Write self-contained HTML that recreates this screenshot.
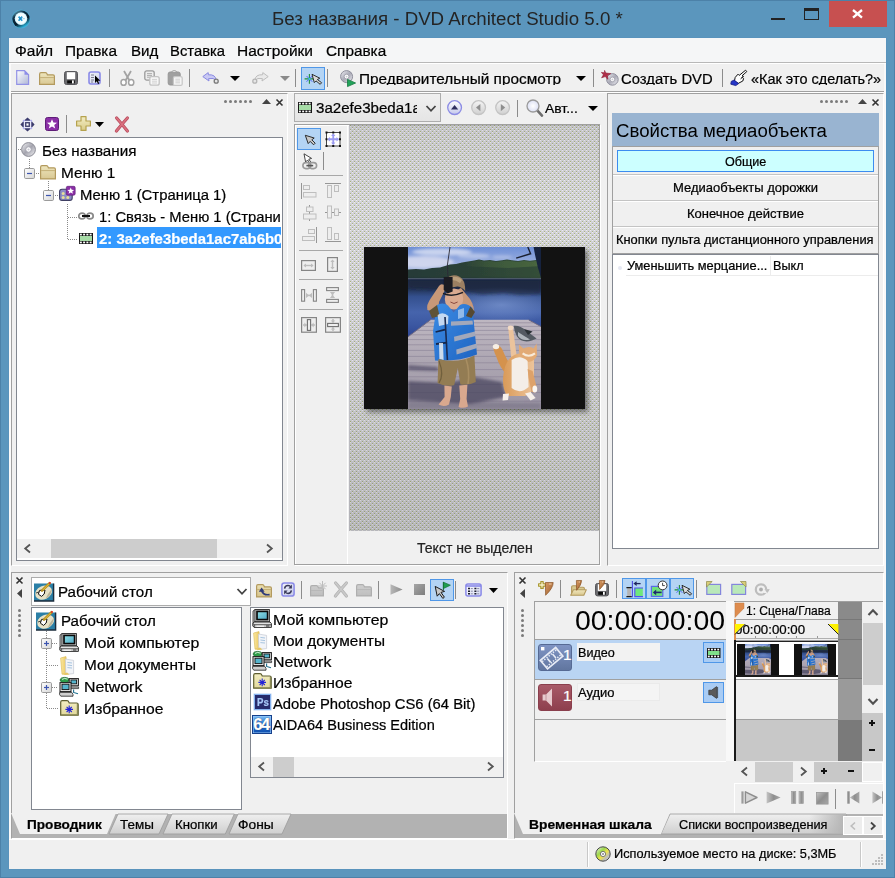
<!DOCTYPE html>
<html lang="ru"><head><meta charset="utf-8"><title>DVD Architect Studio 5.0</title><style>
html,body{margin:0;padding:0}
body{width:895px;height:878px;position:relative;overflow:hidden;background:#5B96BD;font-family:"Liberation Sans",sans-serif;font-size:14.5px}
div,svg,span.t{position:absolute;box-sizing:border-box}
span.t{white-space:nowrap;transform-origin:0 50%;display:block;-webkit-text-stroke:0.22px currentColor}
svg{overflow:visible}
</style></head><body>
<div style="left:0px;top:0px;width:895px;height:878px;box-shadow:inset 0 0 0 1px #4C81A8;"></div>
<div style="left:8px;top:37px;width:879px;height:833px;background:#5993BC;"></div>
<div style="left:9px;top:38px;width:877px;height:831px;background:#F0F0F0;"></div>
<span id="t1" class="t" style="left:271.74px;top:7.06px;font-size:18px;line-height:24px;color:#242424;-webkit-text-stroke:0;transform:scaleX(1.0380);">Без названия - DVD Architect Studio 5.0 *</span>
<div style="left:771px;top:17.5px;width:14px;height:2.5px;background:#222;"></div>
<div style="left:804px;top:8px;width:15px;height:12px;border:1px solid #222;border-top-width:3px;"></div>
<div style="left:829px;top:1px;width:58px;height:26px;background:#C75050;"></div>
<svg style="left:852.3px;top:8.6px;" width="11" height="9.6" viewBox="0 0 11 9.6"><path d="M1 1 L10 8.6 M10 1 L1 8.6" stroke="#fff" stroke-width="2.3" fill="none"/></svg>
<div style="left:9px;top:38px;width:877px;height:24px;background:#F5F6F7;"></div>
<div style="left:9px;top:62px;width:877px;height:1px;background:#B8B8B8;"></div>
<div style="left:9px;top:63px;width:877px;height:1px;background:#FFFFFF;"></div>
<span id="t2" class="t" style="left:14.943px;top:41.07px;font-size:15.1px;line-height:20px;color:#000;transform:scaleX(1.0260);">Файл</span>
<span id="t3" class="t" style="left:64.943px;top:41.07px;font-size:15.1px;line-height:20px;color:#000;transform:scaleX(1.0189);">Правка</span>
<span id="t4" class="t" style="left:130.943px;top:41.07px;font-size:15.1px;line-height:20px;color:#000;transform:scaleX(0.9986);">Вид</span>
<span id="t5" class="t" style="left:169.943px;top:41.07px;font-size:15.1px;line-height:20px;color:#000;transform:scaleX(0.9815);">Вставка</span>
<span id="t6" class="t" style="left:236.943px;top:41.07px;font-size:15.1px;line-height:20px;color:#000;transform:scaleX(1.0265);">Настройки</span>
<span id="t7" class="t" style="left:325.943px;top:41.07px;font-size:15.1px;line-height:20px;color:#000;transform:scaleX(1.0163);">Справка</span>
<div style="left:9px;top:64px;width:2px;height:775px;background:#FAFAFA;"></div>
<div style="left:884px;top:64px;width:2px;height:775px;background:#F8F8F8;"></div>
<div style="left:11px;top:91px;width:873px;height:1px;background:#A0A0A0;"></div>
<div style="left:11px;top:92px;width:873px;height:1px;background:#FFFFFF;"></div>
<div style="left:109px;top:69px;width:1px;height:18px;background:#8C8C8C;"></div>
<div style="left:189px;top:69px;width:1px;height:18px;background:#8C8C8C;"></div>
<div style="left:295px;top:69px;width:1px;height:18px;background:#8C8C8C;"></div>
<div style="left:327px;top:69px;width:1px;height:18px;background:#8C8C8C;"></div>
<div style="left:593px;top:69px;width:1px;height:18px;background:#8C8C8C;"></div>
<div style="left:722px;top:69px;width:1px;height:18px;background:#8C8C8C;"></div>
<div style="left:301px;top:67px;width:24px;height:23px;background:#B4D4F4;border:1px solid #4F97E8;"></div>
<div style="left:330px;top:64px;width:556px;height:21px;overflow:hidden">
<span id="t8" class="t" style="left:29.443px;top:4.57px;font-size:15.1px;line-height:20px;color:#000;transform:scaleX(1.0174);">Предварительный просмотр</span>
<span id="t9" class="t" style="left:291.34299999999996px;top:4.57px;font-size:15.1px;line-height:20px;color:#000;transform:scaleX(0.9813);">Создать DVD</span>
<span id="t10" class="t" style="left:420.943px;top:4.57px;font-size:15.1px;line-height:20px;color:#000;transform:scaleX(0.9586);">«Как это сделать?»</span>
</div>
<svg style="left:229.5px;top:76px;" width="10" height="5" viewBox="0 0 10 5"><path d="M0 0 H10 L5.0 5 Z" fill="#000"/></svg>
<svg style="left:279.5px;top:76px;" width="10" height="5" viewBox="0 0 10 5"><path d="M0 0 H10 L5.0 5 Z" fill="#8a8a8a"/></svg>
<svg style="left:576px;top:76px;" width="10" height="5" viewBox="0 0 10 5"><path d="M0 0 H10 L5.0 5 Z" fill="#000"/></svg>
<div style="left:11px;top:93px;width:277px;height:473px;background:#F0F0F0;border:1px solid #A0A0A0;border-right-color:#FFFFFF;border-bottom-color:#FFFFFF;"></div>
<div style="left:224px;top:100px;width:3px;height:3px;background:#7a7a7a;border-radius:1.5px;"></div>
<div style="left:229px;top:100px;width:3px;height:3px;background:#7a7a7a;border-radius:1.5px;"></div>
<div style="left:234px;top:100px;width:3px;height:3px;background:#7a7a7a;border-radius:1.5px;"></div>
<div style="left:239px;top:100px;width:3px;height:3px;background:#7a7a7a;border-radius:1.5px;"></div>
<div style="left:244px;top:100px;width:3px;height:3px;background:#7a7a7a;border-radius:1.5px;"></div>
<div style="left:249px;top:100px;width:3px;height:3px;background:#7a7a7a;border-radius:1.5px;"></div>
<svg style="left:261.5px;top:99px;" width="9" height="5" viewBox="0 0 9 5"><path d="M0 5 L4.5 0 L9 5 Z" fill="#444"/></svg>
<svg style="left:276px;top:98.5px;" width="7" height="7" viewBox="0 0 7 7"><path d="M0.5 0.5 L6.5 6.5 M6.5 0.5 L0.5 6.5" stroke="#333" stroke-width="1.6" fill="none"/></svg>
<div style="left:66px;top:115px;width:1px;height:18px;background:#8C8C8C;"></div>
<svg style="left:95px;top:122px;" width="9" height="5" viewBox="0 0 9 5"><path d="M0 0 H9 L4.5 5 Z" fill="#000"/></svg>
<div style="left:16px;top:137px;width:267px;height:424px;background:#FFFFFF;border:1px solid #828790;"></div>
<div style="left:97px;top:227px;width:184px;height:21px;background:#3399FF;"></div>
<span id="t11" class="t" style="left:41.643px;top:140.57px;font-size:15.1px;line-height:20px;color:#000;transform:scaleX(1.0071);">Без названия</span>
<span id="t12" class="t" style="left:60.943px;top:162.57px;font-size:15.1px;line-height:20px;color:#000;transform:scaleX(1.0182);">Меню 1</span>
<span id="t13" class="t" style="left:80.243px;top:184.57px;font-size:15.1px;line-height:20px;color:#000;transform:scaleX(0.9843);">Меню 1 (Страница 1)</span>
<div style="left:0;top:0;width:281px;height:878px;overflow:hidden"><span id="t14" class="t" style="left:98.943px;top:206.57px;font-size:15.1px;line-height:20px;color:#000;transform:scaleX(0.9783);">1: Связь - Меню 1 (Страница 1)</span></div>
<div style="left:0;top:0;width:281px;height:878px;overflow:hidden"><span id="t15" class="t" style="left:98.54299999999999px;top:228.57px;font-size:15.1px;line-height:20px;color:#fff;font-weight:bold;transform:scaleX(0.9890);">2: 3a2efe3beda1ac7ab6b0a</span></div>
<div style="left:17px;top:539px;width:265px;height:19px;background:#F0F0F0;"></div>
<div style="left:51px;top:539px;width:166px;height:19px;background:#CDCDCD;"></div>
<svg style="left:24px;top:544px;" width="7" height="9" viewBox="0 0 7 9"><path d="M6 0.5 L1.2 4.5 L6 8.5" stroke="#555" stroke-width="1.8" fill="none"/></svg>
<svg style="left:266px;top:544px;" width="7" height="9" viewBox="0 0 7 9"><path d="M1 0.5 L5.8 4.5 L1 8.5" stroke="#555" stroke-width="1.8" fill="none"/></svg>
<div style="left:294px;top:93px;width:147px;height:29px;background:linear-gradient(#F0F0F0,#E5E5E5);border:1px solid #ADADAD;"></div>
<div style="left:294px;top:124px;width:306px;height:441px;background:#F0F0F0;border:1px solid #A0A0A0;box-shadow:1px 1px 0 #FFFFFF;"></div>
<div style="left:0;top:0;width:417px;height:878px;overflow:hidden"><span id="t16" class="t" style="left:316.443px;top:98.27px;font-size:15.1px;line-height:20px;color:#000;transform:scaleX(0.9996);">3a2efe3beda1ac7ab6b0a</span></div>
<svg style="left:426px;top:104.5px;" width="10" height="7" viewBox="0 0 10 7"><path d="M0.5 1 L5.0 5.8 L9.5 1" stroke="#444" stroke-width="1.8" fill="none"/></svg>
<div style="left:517px;top:100px;width:1px;height:17px;background:#8C8C8C;"></div>
<span id="t17" class="t" style="left:544.7180000000001px;top:98.73px;font-size:12.6px;line-height:20px;color:#000;transform:scaleX(1.1046);">Авт...</span>
<svg style="left:587.5px;top:106px;" width="10" height="5" viewBox="0 0 10 5"><path d="M0 0 H10 L5.0 5 Z" fill="#000"/></svg>
<div style="left:295px;top:125px;width:304px;height:1px;background:#FFFFFF;"></div>
<div style="left:295px;top:125px;width:1px;height:439px;background:#FFFFFF;"></div>
<div style="left:347px;top:125px;width:1px;height:439px;background:#FFFFFF;"></div>
<div style="left:297px;top:128px;width:24px;height:22px;background:#B4D4F4;border:1px solid #4F97E8;"></div>
<div style="left:323px;top:152px;width:1px;height:18px;background:#8C8C8C;"></div>
<div style="left:299px;top:175px;width:44px;height:1px;background:#A8A8A8;"></div>
<div style="left:299px;top:250px;width:44px;height:1px;background:#A8A8A8;"></div>
<div style="left:299px;top:279px;width:44px;height:1px;background:#A8A8A8;"></div>
<div style="left:299px;top:309px;width:44px;height:1px;background:#A8A8A8;"></div>
<svg style="left:349px;top:125px" width="250" height="406"><defs><pattern id="chk" width="4" height="4" patternUnits="userSpaceOnUse"><rect width="4" height="4" fill="#D2D2D8"/><rect x="1" y="0" width="1" height="1" fill="#AAB482"/><rect x="3" y="2" width="1" height="1" fill="#AAB482"/><rect x="1" y="1" width="1" height="1" fill="#F0F0EB"/><rect x="3" y="3" width="1" height="1" fill="#F0F0EB"/></pattern><linearGradient id="chg" x1="0" y1="0" x2="0" y2="1"><stop offset="0" stop-color="#000" stop-opacity="0.06"/><stop offset="0.19" stop-color="#000" stop-opacity="0"/><stop offset="0.44" stop-color="#000" stop-opacity="0.012"/><stop offset="0.79" stop-color="#000" stop-opacity="0.088"/><stop offset="1" stop-color="#000" stop-opacity="0.128"/></linearGradient></defs><rect width="250" height="406" fill="url(#chk)"/><rect width="250" height="406" fill="url(#chg)"/></svg>
<div style="left:364px;top:247px;width:221px;height:162px;background:#121212;box-shadow:3px 3px 5px rgba(0,0,0,0.45);"></div>
<svg style="left:408px;top:247px" width="133" height="162" viewBox="0 0 133 162"><defs>
<linearGradient id="psky" x1="0" y1="0" x2="0" y2="1"><stop offset="0" stop-color="#6E8FD6"/><stop offset="0.4" stop-color="#94AADE"/><stop offset="1" stop-color="#CCD3EA"/></linearGradient>
<linearGradient id="plake" x1="0" y1="0" x2="0" y2="1"><stop offset="0" stop-color="#1A2842"/><stop offset="0.16" stop-color="#20304F"/><stop offset="0.3" stop-color="#34508E"/><stop offset="0.55" stop-color="#4664AC"/><stop offset="0.75" stop-color="#3C58A2"/><stop offset="1" stop-color="#2B4290"/></linearGradient>
<radialGradient id="plight" cx="0.7" cy="0.55" r="0.45"><stop offset="0" stop-color="#7F9AD4" stop-opacity="0.7"/><stop offset="1" stop-color="#7F9AD4" stop-opacity="0"/></radialGradient>
<linearGradient id="pdock" x1="0" y1="0" x2="0" y2="1"><stop offset="0" stop-color="#BEB7C1"/><stop offset="0.45" stop-color="#AEA7B3"/><stop offset="1" stop-color="#9A94A3"/></linearGradient>
<linearGradient id="pvest" x1="0" y1="0" x2="1" y2="1"><stop offset="0" stop-color="#3C8CE4"/><stop offset="1" stop-color="#1F64C2"/></linearGradient>
<linearGradient id="pcat" x1="0" y1="0" x2="1" y2="0"><stop offset="0" stop-color="#D99A58"/><stop offset="1" stop-color="#EDC49A"/></linearGradient>
<linearGradient id="ptree" x1="0" y1="0" x2="1" y2="0"><stop offset="0" stop-color="#263A38"/><stop offset="0.5" stop-color="#2B4236"/><stop offset="1" stop-color="#344E38"/></linearGradient>
<linearGradient id="ptreehl" x1="0" y1="0" x2="1" y2="0"><stop offset="0" stop-color="#54753F" stop-opacity="0"/><stop offset="0.4" stop-color="#4E6E40" stop-opacity="0.45"/><stop offset="1" stop-color="#587844" stop-opacity="0.6"/></linearGradient>
<filter id="pb1" x="-10%" y="-10%" width="120%" height="120%"><feGaussianBlur stdDeviation="0.6"/></filter>
<filter id="pb2" x="-20%" y="-20%" width="140%" height="140%"><feGaussianBlur stdDeviation="1.8"/></filter>
<clipPath id="pclip"><rect width="133" height="162"/></clipPath>
</defs>
<g clip-path="url(#pclip)">
<rect width="133" height="34" fill="url(#psky)"/>
<g filter="url(#pb2)"><ellipse cx="34" cy="5" rx="30" ry="3.4" fill="#DCE2F4" opacity="0.8"/><ellipse cx="16" cy="15" rx="30" ry="6" fill="#D8DCF0" opacity="0.85"/><ellipse cx="66" cy="9" rx="16" ry="2.6" fill="#D0D8F0" opacity="0.6"/><ellipse cx="94" cy="10" rx="10" ry="1.6" fill="#C6D0EC" opacity="0.6"/></g>
<rect y="31" width="133" height="62" fill="url(#plake)"/>
<rect y="36" width="133" height="40" fill="url(#plight)"/>
<g filter="url(#pb1)">
<path d="M0 22.4 L8 22 L16 22.6 L24 21 L32 20.4 L37 19 L42 17.6 L48 17 L54 15.4 L60 14.6 L66 13.6 L71 12.4 L76 13.6 L82 13 L88 14 L94 13.2 L99 12.4 L104 13.2 L110 14 L116 13 L122 13.8 L128 13 L133 13.6 V31.4 H0 Z" fill="url(#ptree)"/>
<path d="M56 16.6 L60 15.6 L66 14.6 L71 13.4 L76 14.6 L82 14 L88 15 L94 14.2 L99 13.4 L104 14.2 L110 15 L116 14 L122 14.8 L128 14 L133 14.6 V19 L100 21 L56 19 Z" fill="url(#ptreehl)"/>
<path d="M0 31.2 H133 V32.2 H0 Z" fill="#7E8AA0" opacity="0.7"/>
<path d="M0 32.4 H133 V47 L112 48 L96 46 L74 47.4 L50 43 L24 42.4 L0 41 Z" fill="#1A263E" opacity="0.6" filter="url(#pb2)"/>
</g>
<path d="M125.6 0 H133 V31 Q128.6 18 125.6 0 Z" fill="#16223E"/>
<path d="M108.2 11.1 L122.6 6.7 L119.8 0" stroke="#1A2030" stroke-width="1.4" fill="none"/>
<path d="M0 89.8 L22.6 72.8 H120.6 L133 79.6 V162 H0 Z" fill="url(#pdock)"/>
<path d="M0 89.8 L22.6 72.8 M120.6 72.8 L133 79.6" stroke="#6E6880" stroke-width="1"/>
<g stroke="#81798F" stroke-width="0.6" opacity="0.85"><path d="M19 75.8 H126 M14 79.4 H132 M9 83.4 H133 M3 87.8 H133 M0 92.6 H133 M0 97.8 H133 M0 103.4 H133 M0 109.4 H133 M0 115.8 H133 M0 122.6 H133 M0 129.8 H133 M0 137.4 H133 M0 145.6 H133 M0 154.2 H133"/></g>
<g filter="url(#pb2)"><path d="M0 118 L30 120 L30 124 L0 123 Z" fill="#4A4460" opacity="0.7"/><path d="M0 134 L40 136 L66 130 L94 135 L98 150 L62 157 L0 153 Z" fill="#453F5A" opacity="0.7"/><path d="M0 154 L133 156 V162 H0 Z" fill="#5A546A" opacity="0.35"/></g>
<g filter="url(#pb1)">
<path d="M42 0 L39.4 18 L40 30" stroke="#2A2A36" stroke-width="0.9" fill="none"/>
<!-- boy arms / head -->
<path d="M19.4 63 Q18 58 23 51 L31 39 Q33 36 36 38 L37 43 L31 55 L30 66 Z" fill="#C89878"/>
<path d="M65.4 66 Q67 60 62 52 L53 41 L49 43 L53 56 L56 68 Z" fill="#C89878"/>
<ellipse cx="46" cy="52" rx="9.2" ry="10.6" fill="#DAAA90"/>
<path d="M35.4 43 Q35 29.4 46 28.2 Q57.6 28.6 57.2 44 Q52 38 46.4 40 Q41 40 35.4 43 Z" fill="#9C8062"/>
<path d="M44 30 Q50 29 54 33 L52 36 Q48 33 44 33 Z" fill="#C2A884" opacity="0.8"/>
<path d="M35.8 30 H44.6 V44.6 L39.6 46.6 L35.8 43 Z" fill="#1C1C24"/>
<path d="M35 46.4 Q44 50.4 55 45.4" stroke="#1C1C24" stroke-width="1.5" fill="none"/>
<path d="M42.4 55 Q46 58 49.6 55" stroke="#8A4A40" stroke-width="1" fill="none"/>
<!-- vest -->
<path d="M29 58 Q35 54.6 40 58.6 L45.6 65.6 L52 58 Q58 55 64.4 61 L69 107.6 Q50 115 27 113.6 L25 84 Z" fill="url(#pvest)"/>
<path d="M21 64 L29 58 L31.6 69 L24 71 Z" fill="#5E5238"/><path d="M62.4 59.4 L67 65 L63.4 71 L58 69 Z" fill="#564A32"/>
<path d="M29.6 68 Q35 64 40.4 69 L40 77 L31 79 Z" fill="#DDE8F4" opacity="0.85"/><path d="M50 63 L56 61 L56 70 L50 72 Z" fill="#C6DCF2" opacity="0.65"/>
<path d="M43 74.6 L64.6 73.6 L65 77.6 L43 78.8 Z" fill="#A2A8BA"/><path d="M46 89.8 L66.9 84.6 L67.6 89 L46.4 94.6 Z" fill="#A2A8BA"/><path d="M48.3 102.5 L68.7 96.5 L69.2 101 L48.6 107.4 Z" fill="#A2A8BA"/>
<path d="M37 70 L39.4 113" stroke="#1A2A50" stroke-width="1.6"/><path d="M27.6 85 L37 82.6 M28 97 L39 95.6" stroke="#16264A" stroke-width="1.8"/>
<path d="M31 96 L35 96 L35.6 113 L31.4 112 Z" fill="#E8ECF0" opacity="0.85"/>
<!-- shorts / legs -->
<path d="M30.4 112 Q50 117 66.4 108.6 L67.8 135 Q60 139 52.4 137.4 L49.8 121 L46.2 138 Q38 140.4 29.6 136 Z" fill="#937B52"/>
<path d="M31 114 Q36.4 128 31 136" stroke="#71603E" stroke-width="1.2" fill="none"/><path d="M58 112 Q62 124 60 137" stroke="#A88E62" stroke-width="1.6" fill="none"/>
<path d="M36.4 138.6 L43.8 139.4 L42.8 150 L41 157.4 Q36 160.6 30.6 157.6 L36.6 150 Z" fill="#D9A88E"/>
<path d="M51.3 138.4 L59.4 137.8 L58.6 152 L60 159.4 Q55.6 162 50.6 160 L52.2 152 Z" fill="#D9A88E"/>
<!-- fish -->
<path d="M105.8 78.8 Q112 78 118 83.6 L128.6 91.6 L124 93.6 Q114 96.6 109 89.6 Q106 84.6 105.8 78.8 Z" fill="#525A62"/><path d="M110 85 Q116 89 122 92.4 Q114 94.6 110 89 Z" fill="#C6CCD2" opacity="0.8"/><path d="M116 82 L124.6 84.4 L120 88 Z" fill="#2A3036"/>
<!-- cat -->
<path d="M85.8 99 Q90.6 96 94.6 103 Q98.6 113 103.4 119 L99 128 Q92 121 88 109 Q84.6 102 85.8 99 Z" fill="#D4924E"/><ellipse cx="88" cy="99.6" rx="3.2" ry="2.6" fill="#F6EEE4"/>
<path d="M100.2 80.6 Q104 78.4 105.2 83 L108 104 L109.4 114 L103.6 114 L101.6 95 Z" fill="#EBC39C"/><ellipse cx="102.6" cy="80.8" rx="2.8" ry="2.4" fill="#F2DAC4"/>
<path d="M96 124 Q98.6 109 111 106.6 Q123 104.6 126 112.6 L126 128 L123 146 L117 149 L99 149 Q93 139 96 124 Z" fill="url(#pcat)"/>
<path d="M111 97.6 L115.4 101.6 Q121 98.6 125.6 101.4 L128.6 96.6 L129 108.6 Q126 115.6 118.4 114.8 Q111.6 112 111 104 Z" fill="#E2AA74"/>
<path d="M114.6 106.4 Q120.6 111 127 106.4" stroke="#F8EAD8" stroke-width="2" fill="none"/>
<path d="M103.6 113 Q112 107 119.6 114 L120.6 140 Q112 148 103.6 141 Z" fill="#F4EEE8"/>
<path d="M119.6 122 L124.6 124 L128.4 139 L127.4 145.6 L123.6 145 L120.6 131 Z" fill="#DDA26A"/><ellipse cx="126.8" cy="142" rx="2.4" ry="3.6" fill="#FAF6F0"/>
<path d="M95 147 L101 146.6 L100 153 L94.6 153.6 Z" fill="#F6F0EA"/><path d="M117 146.6 L122.6 145 L127.6 151 L122.6 153.6 Z" fill="#F6F0EA"/>
</g>
</g></svg>
<div style="left:349px;top:125px;width:250px;height:406px;box-shadow:inset 0 1px 2px rgba(0,0,0,0.10);"></div>
<div style="left:349px;top:531px;width:250px;height:33px;background:#F0F0F0;"></div>
<span id="t18" class="t" style="left:416.58500000000004px;top:537.88px;font-size:14.5px;line-height:20px;color:#222;transform:scaleX(0.9696);">Текст не выделен</span>
<div style="left:607px;top:93px;width:277px;height:473px;background:#F0F0F0;border:1px solid #A0A0A0;border-right-color:#FFFFFF;border-bottom-color:#FFFFFF;"></div>
<div style="left:820px;top:100px;width:3px;height:3px;background:#7a7a7a;border-radius:1.5px;"></div>
<div style="left:825px;top:100px;width:3px;height:3px;background:#7a7a7a;border-radius:1.5px;"></div>
<div style="left:830px;top:100px;width:3px;height:3px;background:#7a7a7a;border-radius:1.5px;"></div>
<div style="left:835px;top:100px;width:3px;height:3px;background:#7a7a7a;border-radius:1.5px;"></div>
<div style="left:840px;top:100px;width:3px;height:3px;background:#7a7a7a;border-radius:1.5px;"></div>
<div style="left:845px;top:100px;width:3px;height:3px;background:#7a7a7a;border-radius:1.5px;"></div>
<svg style="left:858px;top:99px;" width="9" height="5" viewBox="0 0 9 5"><path d="M0 5 L4.5 0 L9 5 Z" fill="#444"/></svg>
<svg style="left:872px;top:98.5px;" width="7" height="7" viewBox="0 0 7 7"><path d="M0.5 0.5 L6.5 6.5 M6.5 0.5 L0.5 6.5" stroke="#333" stroke-width="1.6" fill="none"/></svg>
<div style="left:612px;top:113px;width:267px;height:34px;background:#99B4D1;"></div>
<span id="t19" class="t" style="left:616.368px;top:118.70px;font-size:17.6px;line-height:24px;color:#000;-webkit-text-stroke:0;transform:scaleX(1.0592);">Свойства медиаобъекта</span>
<div style="left:612px;top:146px;width:267px;height:108px;background:#F0F0F0;border:1px solid #A0A0A0;"></div>
<div style="left:617px;top:150px;width:257px;height:22px;background:#CCFFFF;border:1px solid #3C8CF0;"></div>
<div style="left:613px;top:174px;width:265px;height:1px;background:#C4C4C4;"></div>
<div style="left:613px;top:175px;width:265px;height:1px;background:#FFFFFF;"></div>
<div style="left:613px;top:200px;width:265px;height:1px;background:#C4C4C4;"></div>
<div style="left:613px;top:201px;width:265px;height:1px;background:#FFFFFF;"></div>
<div style="left:613px;top:226px;width:265px;height:1px;background:#C4C4C4;"></div>
<div style="left:613px;top:227px;width:265px;height:1px;background:#FFFFFF;"></div>
<span id="t20" class="t" style="left:724.632px;top:151.50px;font-size:12.4px;line-height:20px;color:#000;transform:scaleX(1.0149);">Общие</span>
<span id="t21" class="t" style="left:673.132px;top:177.50px;font-size:12.4px;line-height:20px;color:#000;transform:scaleX(1.0479);">Медиаобъекты дорожки</span>
<span id="t22" class="t" style="left:687.132px;top:203.50px;font-size:12.4px;line-height:20px;color:#000;transform:scaleX(1.0506);">Конечное действие</span>
<span id="t23" class="t" style="left:616.132px;top:229.50px;font-size:12.4px;line-height:20px;color:#000;transform:scaleX(1.0388);">Кнопки пульта дистанционного управления</span>
<div style="left:612px;top:254px;width:267px;height:295px;background:#FFFFFF;border:1px solid #828790;"></div>
<span id="t24" class="t" style="left:627.132px;top:255.80px;font-size:12.4px;line-height:20px;color:#000;transform:scaleX(1.0339);">Уменьшить мерцание...</span>
<span id="t25" class="t" style="left:772.632px;top:255.80px;font-size:12.4px;line-height:20px;color:#000;transform:scaleX(1.0204);">Выкл</span>
<div style="left:618px;top:266px;width:4px;height:4px;background:#E6E8F2;border-radius:2px;"></div>
<div style="left:626px;top:275px;width:252px;height:1px;background:#ECECEC;"></div>
<div style="left:770px;top:256px;width:1px;height:20px;background:#ECECEC;"></div>
<div style="left:11px;top:572px;width:497px;height:267px;background:#F0F0F0;border:1px solid #A0A0A0;border-right-color:#FFFFFF;border-bottom-color:#FFFFFF;"></div>
<div style="left:12px;top:814px;width:495px;height:24px;background:#B2B2B2;"></div>
<svg style="left:16px;top:577px;" width="7" height="7" viewBox="0 0 7 7"><path d="M0.5 0.5 L6.5 6.5 M6.5 0.5 L0.5 6.5" stroke="#333" stroke-width="1.6" fill="none"/></svg>
<svg style="left:17px;top:589px;" width="5" height="9" viewBox="0 0 5 9"><path d="M5 0 L0 4.5 L5 9 Z" fill="#444"/></svg>
<div style="left:18px;top:609px;width:3px;height:3px;background:#7a7a7a;border-radius:1.5px;"></div>
<div style="left:18px;top:614px;width:3px;height:3px;background:#7a7a7a;border-radius:1.5px;"></div>
<div style="left:18px;top:619px;width:3px;height:3px;background:#7a7a7a;border-radius:1.5px;"></div>
<div style="left:18px;top:624px;width:3px;height:3px;background:#7a7a7a;border-radius:1.5px;"></div>
<div style="left:18px;top:629px;width:3px;height:3px;background:#7a7a7a;border-radius:1.5px;"></div>
<div style="left:18px;top:634px;width:3px;height:3px;background:#7a7a7a;border-radius:1.5px;"></div>
<div style="left:31px;top:577px;width:220px;height:29px;background:#FFFFFF;border:1px solid #ACACAC;"></div>
<span id="t26" class="t" style="left:58.443px;top:582.07px;font-size:15.1px;line-height:20px;color:#000;transform:scaleX(0.9996);">Рабочий стол</span>
<svg style="left:236.5px;top:588px;" width="10" height="7" viewBox="0 0 10 7"><path d="M0.5 1 L5.0 5.8 L9.5 1" stroke="#444" stroke-width="1.8" fill="none"/></svg>
<div style="left:31px;top:607px;width:211px;height:203px;background:#FFFFFF;border:1px solid #828790;"></div>
<span id="t27" class="t" style="left:60.643px;top:611.07px;font-size:15.1px;line-height:20px;color:#000;transform:scaleX(0.9996);">Рабочий стол</span>
<span id="t28" class="t" style="left:83.54299999999999px;top:633.07px;font-size:15.1px;line-height:20px;color:#000;transform:scaleX(1.0497);">Мой компьютер</span>
<span id="t29" class="t" style="left:83.54299999999999px;top:655.07px;font-size:15.1px;line-height:20px;color:#000;transform:scaleX(1.0178);">Мои документы</span>
<span id="t30" class="t" style="left:83.54299999999999px;top:677.07px;font-size:15.1px;line-height:20px;color:#000;transform:scaleX(1.0539);">Network</span>
<span id="t31" class="t" style="left:83.54299999999999px;top:699.07px;font-size:15.1px;line-height:20px;color:#000;transform:scaleX(1.0385);">Избранное</span>
<div style="left:301px;top:581px;width:1px;height:18px;background:#8C8C8C;"></div>
<div style="left:378px;top:581px;width:1px;height:18px;background:#8C8C8C;"></div>
<div style="left:455px;top:581px;width:1px;height:18px;background:#8C8C8C;"></div>
<div style="left:430px;top:579px;width:24px;height:22px;background:#B4D4F4;border:1px solid #4F97E8;"></div>
<svg style="left:489px;top:588px;" width="9" height="5" viewBox="0 0 9 5"><path d="M0 0 H9 L4.5 5 Z" fill="#000"/></svg>
<div style="left:250px;top:607px;width:254px;height:171px;background:#FFFFFF;border:1px solid #828790;"></div>
<span id="t32" class="t" style="left:273.34299999999996px;top:609.57px;font-size:15.1px;line-height:20px;color:#000;transform:scaleX(1.0497);">Мой компьютер</span>
<span id="t33" class="t" style="left:273.34299999999996px;top:630.57px;font-size:15.1px;line-height:20px;color:#000;transform:scaleX(1.0178);">Мои документы</span>
<span id="t34" class="t" style="left:273.34299999999996px;top:651.57px;font-size:15.1px;line-height:20px;color:#000;transform:scaleX(1.0539);">Network</span>
<span id="t35" class="t" style="left:273.34299999999996px;top:672.57px;font-size:15.1px;line-height:20px;color:#000;transform:scaleX(1.0385);">Избранное</span>
<span id="t36" class="t" style="left:273.34299999999996px;top:693.57px;font-size:15.1px;line-height:20px;color:#000;transform:scaleX(0.9804);">Adobe Photoshop CS6 (64 Bit)</span>
<span id="t37" class="t" style="left:273.34299999999996px;top:714.57px;font-size:15.1px;line-height:20px;color:#000;transform:scaleX(0.9641);">AIDA64 Business Edition</span>
<div style="left:251px;top:757px;width:252px;height:20px;background:#F0F0F0;"></div>
<div style="left:273px;top:757px;width:21px;height:20px;background:#CDCDCD;"></div>
<svg style="left:258px;top:762px;" width="7" height="9" viewBox="0 0 7 9"><path d="M6 0.5 L1.2 4.5 L6 8.5" stroke="#555" stroke-width="1.8" fill="none"/></svg>
<svg style="left:487px;top:762px;" width="7" height="9" viewBox="0 0 7 9"><path d="M1 0.5 L5.8 4.5 L1 8.5" stroke="#555" stroke-width="1.8" fill="none"/></svg>
<div style="left:514px;top:572px;width:370px;height:267px;background:#F0F0F0;border:1px solid #A0A0A0;border-right-color:#FFFFFF;border-bottom-color:#FFFFFF;"></div>
<div style="left:515px;top:814px;width:368px;height:24px;background:#B2B2B2;"></div>
<svg style="left:519px;top:577px;" width="7" height="7" viewBox="0 0 7 7"><path d="M0.5 0.5 L6.5 6.5 M6.5 0.5 L0.5 6.5" stroke="#333" stroke-width="1.6" fill="none"/></svg>
<svg style="left:520px;top:589px;" width="5" height="9" viewBox="0 0 5 9"><path d="M5 0 L0 4.5 L5 9 Z" fill="#444"/></svg>
<div style="left:521px;top:609px;width:3px;height:3px;background:#7a7a7a;border-radius:1.5px;"></div>
<div style="left:521px;top:614px;width:3px;height:3px;background:#7a7a7a;border-radius:1.5px;"></div>
<div style="left:521px;top:619px;width:3px;height:3px;background:#7a7a7a;border-radius:1.5px;"></div>
<div style="left:521px;top:624px;width:3px;height:3px;background:#7a7a7a;border-radius:1.5px;"></div>
<div style="left:521px;top:629px;width:3px;height:3px;background:#7a7a7a;border-radius:1.5px;"></div>
<div style="left:521px;top:634px;width:3px;height:3px;background:#7a7a7a;border-radius:1.5px;"></div>
<div style="left:560px;top:580px;width:1px;height:18px;background:#8C8C8C;"></div>
<div style="left:616px;top:580px;width:1px;height:18px;background:#8C8C8C;"></div>
<div style="left:696px;top:580px;width:1px;height:18px;background:#8C8C8C;"></div>
<div style="left:622px;top:578px;width:24px;height:21px;background:#B4D4F4;border:1px solid #4F97E8;"></div>
<div style="left:646px;top:578px;width:24px;height:21px;background:#B4D4F4;border:1px solid #4F97E8;"></div>
<div style="left:670px;top:578px;width:24px;height:21px;background:#B4D4F4;border:1px solid #4F97E8;"></div>
<div style="left:534px;top:601px;width:192px;height:161px;background:#F0F0F0;border:1px solid #A0A0A0;border-right:none;border-bottom-color:#FFFFFF;"></div>
<span id="t38" class="t" style="left:575.11px;top:605.24px;font-size:27px;line-height:32px;color:#000;-webkit-text-stroke:0;transform:scaleX(1.0525);">00:00:00:00</span>
<div style="left:535px;top:639px;width:191px;height:1px;background:#A0A0A0;"></div>
<div style="left:535px;top:640px;width:191px;height:39px;background:#B9D4F3;"></div>
<div style="left:535px;top:679px;width:191px;height:1px;background:#A0A0A0;"></div>
<div style="left:535px;top:719px;width:191px;height:1px;background:#A0A0A0;"></div>
<div style="left:538px;top:644px;width:34px;height:27px;background:linear-gradient(#7F94C4,#61769F);border:1px solid #566A94;border-radius:3px;"></div>
<div style="left:577px;top:643px;width:83px;height:18px;background:#F2F2F2;"></div>
<span id="t39" class="t" style="left:578.132px;top:642.80px;font-size:12.4px;line-height:20px;color:#000;transform:scaleX(1.0170);">Видео</span>
<div style="left:703px;top:642px;width:21px;height:21px;background:#A9CCF4;border:1px solid #4F97E8;"></div>
<div style="left:538px;top:684px;width:34px;height:27px;background:linear-gradient(#A85A68,#8E3F4E);border:1px solid #8A3F4D;border-radius:3px;"></div>
<div style="left:577px;top:683px;width:83px;height:18px;background:#F4F4F4;border:1px solid #EAEAEA;"></div>
<span id="t40" class="t" style="left:578.132px;top:683.00px;font-size:12.4px;line-height:20px;color:#000;transform:scaleX(1.0461);">Аудио</span>
<div style="left:703px;top:682px;width:21px;height:21px;background:#A9CCF4;border:1px solid #4F97E8;"></div>
<div style="left:726px;top:601px;width:8px;height:160px;background:#F8F8F8;"></div>
<div style="left:734px;top:602px;width:2px;height:18px;background:#F0F0F0;"></div>
<div style="left:734px;top:619px;width:2px;height:22px;background:#E0904E;"></div>
<div style="left:734px;top:640px;width:2px;height:121px;background:#1a1a1a;"></div>
<div style="left:736px;top:602px;width:102px;height:18px;background:#F0F0F0;"></div>
<div style="left:736px;top:619px;width:102px;height:1px;background:#A0A0A0;"></div>
<div style="left:736px;top:620px;width:102px;height:19px;background:#F0F0F0;"></div>
<div style="left:736px;top:640px;width:102px;height:1px;background:#A0A0A0;"></div>
<div style="left:736px;top:641px;width:102px;height:1px;background:#222;"></div>
<div style="left:736px;top:642px;width:102px;height:33px;background:#FFFFFF;"></div>
<div style="left:736px;top:675px;width:102px;height:2px;background:#1a1a1a;"></div>
<div style="left:736px;top:677px;width:102px;height:2px;background:#FFFFFF;"></div>
<div style="left:736px;top:679px;width:102px;height:41px;background:#F0F0F0;"></div>
<div style="left:736px;top:679px;width:102px;height:1px;background:#A0A0A0;"></div>
<div style="left:736px;top:719px;width:102px;height:1px;background:#A0A0A0;"></div>
<div style="left:736px;top:720px;width:102px;height:41px;background:#C8C8C8;"></div>
<div style="left:838px;top:602px;width:24px;height:77px;background:#8A8A8A;"></div>
<div style="left:838px;top:679px;width:24px;height:41px;background:#9A9A9A;"></div>
<div style="left:838px;top:720px;width:24px;height:41px;background:#7A7A7A;"></div>
<div style="left:838px;top:619px;width:24px;height:1px;background:#777;"></div>
<div style="left:838px;top:639px;width:24px;height:1px;background:#777;"></div>
<div style="left:838px;top:678px;width:24px;height:1px;background:#777;"></div>
<span id="t41" class="t" style="left:745.832px;top:600.70px;font-size:12.4px;line-height:20px;color:#000;transform:scaleX(0.9703);">1: Сцена/Глава</span>
<span id="t42" class="t" style="left:734.732px;top:620.40px;font-size:12.4px;line-height:20px;color:#000;transform:scaleX(1.0710);">00:00:00:00</span>
<div style="left:734px;top:601px;width:149px;height:1px;background:#A0A0A0;"></div>
<div style="left:862px;top:602px;width:21px;height:111px;background:#F0F0F0;"></div>
<div style="left:863px;top:623px;width:20px;height:62px;background:#CDCDCD;"></div>
<svg style="left:868px;top:609px;" width="10" height="7" viewBox="0 0 10 7"><path d="M0.5 6 L5.0 1.2 L9.5 6" stroke="#505050" stroke-width="2.1" fill="none"/></svg>
<svg style="left:868px;top:698px;" width="10" height="7" viewBox="0 0 10 7"><path d="M0.5 1 L5.0 5.8 L9.5 1" stroke="#505050" stroke-width="2.1" fill="none"/></svg>
<div style="left:862px;top:713px;width:21px;height:48px;background:#C8C8C8;"></div>
<div style="left:869px;top:722px;width:6px;height:2px;background:#111;"></div>
<div style="left:871px;top:720px;width:2px;height:6px;background:#111;"></div>
<div style="left:869px;top:749px;width:6px;height:2px;background:#111;"></div>
<div style="left:734px;top:762px;width:128px;height:20px;background:#F0F0F0;"></div>
<div style="left:755px;top:762px;width:38px;height:20px;background:#CDCDCD;"></div>
<svg style="left:741px;top:767px;" width="7" height="9" viewBox="0 0 7 9"><path d="M6 0.5 L1.2 4.5 L6 8.5" stroke="#555" stroke-width="1.8" fill="none"/></svg>
<svg style="left:800px;top:767px;" width="7" height="9" viewBox="0 0 7 9"><path d="M1 0.5 L5.8 4.5 L1 8.5" stroke="#555" stroke-width="1.8" fill="none"/></svg>
<div style="left:814px;top:762px;width:48px;height:20px;background:#C8C8C8;"></div>
<div style="left:821px;top:770px;width:6px;height:2px;background:#111;"></div>
<div style="left:823px;top:768px;width:2px;height:6px;background:#111;"></div>
<div style="left:848px;top:770px;width:6px;height:2px;background:#111;"></div>
<div style="left:862px;top:762px;width:21px;height:20px;background:#F0F0F0;border:1px solid #FFFFFF;"></div>
<div style="left:734px;top:783px;width:149px;height:30px;background:#F0F0F0;border-left:1px solid #FFFFFF;border-top:1px solid #FFFFFF;"></div>
<div style="left:835px;top:789px;width:1px;height:20px;background:#8C8C8C;"></div>
<div style="left:9px;top:839px;width:877px;height:1px;background:#FFFFFF;"></div>
<div style="left:587px;top:842px;width:1px;height:25px;background:#C8C8C8;"></div>
<div style="left:588px;top:842px;width:1px;height:25px;background:#FFFFFF;"></div>
<div style="left:860px;top:842px;width:1px;height:25px;background:#C8C8C8;"></div>
<div style="left:861px;top:842px;width:1px;height:25px;background:#FFFFFF;"></div>
<span id="t43" class="t" style="left:614.132px;top:843.50px;font-size:12.4px;line-height:20px;color:#000;transform:scaleX(1.0283);">Используемое место на диске: 5,3МБ</span>
<div style="left:872px;top:863px;width:2px;height:2px;background:#BDBDBD;"></div>
<div style="left:875px;top:860px;width:2px;height:2px;background:#BDBDBD;"></div>
<div style="left:875px;top:863px;width:2px;height:2px;background:#BDBDBD;"></div>
<div style="left:878px;top:857px;width:2px;height:2px;background:#BDBDBD;"></div>
<div style="left:878px;top:860px;width:2px;height:2px;background:#BDBDBD;"></div>
<div style="left:878px;top:863px;width:2px;height:2px;background:#BDBDBD;"></div>
<div style="left:881px;top:854px;width:2px;height:2px;background:#BDBDBD;"></div>
<div style="left:881px;top:857px;width:2px;height:2px;background:#BDBDBD;"></div>
<div style="left:881px;top:860px;width:2px;height:2px;background:#BDBDBD;"></div>
<div style="left:881px;top:863px;width:2px;height:2px;background:#BDBDBD;"></div>
<svg style="left:109px;top:814px;" width="68" height="20" viewBox="0 0 68 20"><defs><linearGradient id="tg109" x1="0" y1="0" x2="0" y2="1"><stop offset="0" stop-color="#EFEFEF"/><stop offset="1" stop-color="#CFCFCF"/></linearGradient></defs><path d="M9 0 H59 L50 20 H0 Z" fill="url(#tg109)" stroke="#9A9A9A" stroke-width="0.8"/></svg>
<span id="t44" class="t" style="left:119.932px;top:814.80px;font-size:12.4px;line-height:20px;color:#000;transform:scaleX(1.0843);">Темы</span>
<svg style="left:162.7px;top:814px;" width="80.30000000000001" height="20" viewBox="0 0 80.30000000000001 20"><defs><linearGradient id="tg162" x1="0" y1="0" x2="0" y2="1"><stop offset="0" stop-color="#EFEFEF"/><stop offset="1" stop-color="#CFCFCF"/></linearGradient></defs><path d="M9 0 H71.30000000000001 L62.30000000000001 20 H0 Z" fill="url(#tg162)" stroke="#9A9A9A" stroke-width="0.8"/></svg>
<span id="t45" class="t" style="left:175.132px;top:814.80px;font-size:12.4px;line-height:20px;color:#000;transform:scaleX(1.0653);">Кнопки</span>
<svg style="left:229px;top:814px;" width="71" height="20" viewBox="0 0 71 20"><defs><linearGradient id="tg229" x1="0" y1="0" x2="0" y2="1"><stop offset="0" stop-color="#EFEFEF"/><stop offset="1" stop-color="#CFCFCF"/></linearGradient></defs><path d="M9 0 H62 L53 20 H0 Z" fill="url(#tg229)" stroke="#9A9A9A" stroke-width="0.8"/></svg>
<span id="t46" class="t" style="left:237.93200000000002px;top:814.80px;font-size:12.4px;line-height:20px;color:#000;transform:scaleX(1.1129);">Фоны</span>
<svg style="left:11px;top:813px;" width="115" height="21" viewBox="0 0 115 21"><path d="M0 0 L9 21 H96 L105 0 Z" fill="#F0F0F0"/></svg>
<span id="t47" class="t" style="left:27.032px;top:814.80px;font-size:12.4px;line-height:20px;color:#000;font-weight:bold;transform:scaleX(1.0972);">Проводник</span>
<svg style="left:661px;top:814px;" width="185" height="20" viewBox="0 0 185 20"><defs><linearGradient id="tgr" x1="0" y1="0" x2="0" y2="1"><stop offset="0" stop-color="#EFEFEF"/><stop offset="1" stop-color="#CFCFCF"/></linearGradient><linearGradient id="tfade" x1="0" y1="0" x2="1" y2="0"><stop offset="0.8" stop-color="#B2B2B2" stop-opacity="0"/><stop offset="1" stop-color="#B2B2B2" stop-opacity="1"/></linearGradient></defs><path d="M9 0 H185 V20 H0 Z" fill="url(#tgr)" stroke="#9A9A9A" stroke-width="0.8"/><rect x="0" y="0" width="185" height="20" fill="url(#tfade)"/></svg>
<span id="t48" class="t" style="left:678.5319999999999px;top:814.60px;font-size:12.4px;line-height:20px;color:#000;transform:scaleX(1.0249);">Списки воспроизведения</span>
<svg style="left:514px;top:813px;" width="166" height="21" viewBox="0 0 166 21"><path d="M0 0 L9 21 H147 L156 0 Z" fill="#F0F0F0"/></svg>
<span id="t49" class="t" style="left:529.132px;top:814.80px;font-size:12.4px;line-height:20px;color:#000;font-weight:bold;transform:scaleX(1.1147);">Временная шкала</span>
<div style="left:843px;top:816px;width:20px;height:19px;background:#EDEDED;border:1px solid #FFFFFF;"></div>
<div style="left:863px;top:816px;width:20px;height:19px;background:#EDEDED;border:1px solid #FFFFFF;"></div>
<svg style="left:850px;top:821.5px;" width="6" height="8" viewBox="0 0 6 8"><path d="M5 0.5 L1.2 4.0 L5 7.5" stroke="#BDBDBD" stroke-width="1.6" fill="none"/></svg>
<svg style="left:870px;top:821.5px;" width="6" height="8" viewBox="0 0 6 8"><path d="M1 0.5 L4.8 4.0 L1 7.5" stroke="#444" stroke-width="1.8" fill="none"/></svg>
<svg style="left:11px;top:9px;" width="20" height="20" viewBox="0 0 20 20"><defs><radialGradient id="g1" cx="0.5" cy="0.5" r="0.5"><stop offset="0" stop-color="#ffffff"/><stop offset="0.75" stop-color="#F2FDFF"/><stop offset="1" stop-color="#C6F0FA"/></radialGradient><linearGradient id="g2" x1="0" y1="0" x2="0.6" y2="1"><stop offset="0" stop-color="#8FDDF2"/><stop offset="0.35" stop-color="#0C3048"/><stop offset="0.7" stop-color="#061C2C"/><stop offset="1" stop-color="#2BB4DC"/></linearGradient></defs><circle cx="10" cy="10" r="9.4" fill="#49B9E0" opacity="0.55"/><circle cx="10" cy="10" r="8.7" fill="url(#g2)"/><circle cx="10" cy="9.6" r="6.3" fill="url(#g1)"/><path d="M7.6 7.6 L11.2 11.8 M11.2 7.6 L7.6 11.8" stroke="#2A9ED2" stroke-width="1.7"/><circle cx="9.4" cy="9.7" r="1.1" fill="#1C86C0"/><path d="M11.6 9.7 H13.8" stroke="#8CCFEA" stroke-width="1"/></svg>
<svg style="left:16px;top:70px;" width="14" height="15" viewBox="0 0 14 15"><defs><linearGradient id="g3" x1="0" y1="0" x2="1" y2="1"><stop offset="0" stop-color="#ffffff"/><stop offset="1" stop-color="#AEB6D6"/></linearGradient></defs><path d="M0.7 0.7 H8.5 L12.6 4.8 V14.3 H0.7 Z" fill="url(#g3)" stroke="#9292E6" stroke-width="1.2"/><path d="M8.5 0.7 V4.8 H12.6 Z" fill="#8C8CE8"/></svg>
<svg style="left:39px;top:72px;" width="16" height="13" viewBox="0 0 16 13"><defs><linearGradient id="g4" x1="0" y1="0" x2="0" y2="1"><stop offset="0" stop-color="#EEE6BE"/><stop offset="1" stop-color="#D9C894"/></linearGradient></defs><path d="M0.6 12.4 V2.2 Q0.6 0.6 2 0.6 H6.5 Q7.6 0.6 8 1.8 L8.4 2.8 H14 Q15.4 2.8 15.4 4.2 V12.4 Z" fill="url(#g4)" stroke="#B39A5E" stroke-width="1.2"/><path d="M1.2 5.6 H14.8" stroke="#B39A5E" stroke-width="0.9" opacity="0.75"/></svg>
<svg style="left:64px;top:71px;" width="14" height="14" viewBox="0 0 14 14"><rect x="0.5" y="0.5" width="13" height="13" rx="2" fill="#6A6A6E" stroke="#57575B"/><rect x="2.8" y="1.2" width="8.4" height="7.0" fill="#fff"/><rect x="3.2" y="9.4" width="7.6" height="3" fill="#0b0b0b"/><rect x="8" y="9.4" width="1.8" height="3" fill="#fff"/></svg>
<svg style="left:88px;top:71px;" width="13" height="14" viewBox="0 0 13 14"><defs><linearGradient id="g5" x1="0" y1="0" x2="1" y2="1"><stop offset="0" stop-color="#F4F5FC"/><stop offset="1" stop-color="#C9CFE6"/></linearGradient></defs><rect x="1" y="1" width="11" height="12" rx="2" fill="url(#g5)" stroke="#8A8AE8" stroke-width="1.6"/><path d="M3 4 H6 M3 6.5 H6 M3 9 H6 M3 11 H5" stroke="#7d7d90" stroke-width="1"/><path d="M7 4.5 V12 L8.8 10.3 L10 13 L11.2 12.4 L10 9.8 H12.4 Z" fill="#000"/></svg>
<svg style="left:120px;top:70px;" width="15" height="16" viewBox="0 0 15 16"><path d="M4 1 L9.5 10.5 M11 1 L5.5 10.5" stroke="#A3A3A3" stroke-width="1.8" fill="none"/><ellipse cx="3.6" cy="12.4" rx="2.6" ry="2.9" fill="#fff" stroke="#A3A3A3" stroke-width="1.5"/><ellipse cx="11.2" cy="12.4" rx="2.6" ry="2.9" fill="#fff" stroke="#A3A3A3" stroke-width="1.5"/></svg>
<svg style="left:144px;top:70px;" width="16" height="16" viewBox="0 0 16 16"><rect x="0.8" y="0.8" width="9.4" height="9.4" rx="2" fill="#EDEDED" stroke="#9A9A9A" stroke-width="1.3"/><path d="M3 3.6 H8 M3 5.4 H8 M3 7.2 H8" stroke="#ADADAD" stroke-width="1"/><rect x="5.8" y="6.6" width="9.4" height="8.6" rx="2" fill="#F6F6F6" stroke="#C2C2C2" stroke-width="1.3"/><path d="M8 9.4 H13 M8 11.2 H13 M8 13 H13" stroke="#D2D2D2" stroke-width="1"/></svg>
<svg style="left:167px;top:70px;" width="16" height="16" viewBox="0 0 16 16"><rect x="1.2" y="2" width="12" height="13" rx="2" fill="#A0A0A0" stroke="#969696"/><path d="M4.6 2.6 Q4.6 0.6 7.2 0.6 Q9.8 0.6 9.8 2.6 Z" fill="#E8E8E8" stroke="#969696" stroke-width="0.9"/><rect x="6.4" y="6.6" width="8.8" height="8.8" rx="1.5" fill="#F4F4F4" stroke="#C6C6C6" stroke-width="1.2"/><path d="M8.4 9.2 H13 M8.4 11 H13 M8.4 12.8 H13" stroke="#D0D0D0" stroke-width="1"/></svg>
<svg style="left:202px;top:72px;" width="18" height="12" viewBox="0 0 18 12"><g><path d="M0.8 4.6 L6.2 0.6 L6.4 2.8 Q13.5 2.2 14.2 8.2 Q11.6 5.6 6.6 6.6 L7 9 Z" fill="#C9C9F3" stroke="#8A8AE2" stroke-width="1"/><circle cx="14.2" cy="9.2" r="2" fill="#E6E6E6" stroke="#7A7A7A" stroke-width="1.3"/></g></svg>
<svg style="left:251px;top:72px;" width="18" height="12" viewBox="0 0 18 12"><g transform="translate(18 0) scale(-1 1)"><path d="M0.8 4.6 L6.2 0.6 L6.4 2.8 Q13.5 2.2 14.2 8.2 Q11.6 5.6 6.6 6.6 L7 9 Z" fill="#E9E9E9" stroke="#BDBDBD" stroke-width="1"/><circle cx="14.2" cy="9.2" r="2" fill="#E6E6E6" stroke="#B5B5B5" stroke-width="1.3"/></g></svg>
<svg style="left:304px;top:71.5px;" width="20" height="14" viewBox="0 0 20 14"><path d="M5.4 2 V11.8 M0.6 6.9 H10.2" stroke="#1F8F3A" stroke-width="1.1"/><path d="M2.6 4.1 L8.2 9.7 M8.2 4.1 L2.6 9.7" stroke="#4A5CF0" stroke-width="1"/><circle cx="5.4" cy="6.9" r="1.1" fill="#38C8D8"/><path d="M8 2.3 L15.8 6.2 L13.4 7.5 L17.6 10.7 L16.2 12.3 L12 8.9 L10.3 10.6 Z" fill="#DADADA" stroke="#1a1a1a" stroke-width="0.9" stroke-linejoin="round"/></svg>
<svg style="left:340px;top:69.5px;" width="13.2" height="13.2" viewBox="0 0 13.2 13.2"><defs><linearGradient id="g6" x1="0" y1="0" x2="1" y2="1"><stop offset="0" stop-color="#F2F2F6"/><stop offset="0.5" stop-color="#A9A9B6"/><stop offset="1" stop-color="#F2F2F6"/></linearGradient></defs><circle cx="6.6" cy="6.6" r="6.0" fill="url(#g6)" stroke="#8E8E9C" stroke-width="1"/><circle cx="6.6" cy="6.6" r="2.376" fill="#fff" stroke="#9C9CA8" stroke-width="0.8"/><circle cx="6.6" cy="6.6" r="0.924" fill="#C8C8D2"/></svg>
<svg style="left:346.5px;top:78.5px;" width="9" height="8" viewBox="0 0 9 8"><path d="M0.5 0.4 L8.6 4 L0.5 7.6 Z" fill="#22A35A" stroke="#157A40" stroke-width="0.8"/></svg>
<svg style="left:605.5px;top:72.5px;" width="12.8" height="12.8" viewBox="0 0 12.8 12.8"><defs><linearGradient id="g7" x1="0" y1="0" x2="1" y2="1"><stop offset="0" stop-color="#F2F2F6"/><stop offset="0.5" stop-color="#A9A9B6"/><stop offset="1" stop-color="#F2F2F6"/></linearGradient></defs><circle cx="6.4" cy="6.4" r="5.800000000000001" fill="url(#g7)" stroke="#8E8E9C" stroke-width="1"/><circle cx="6.4" cy="6.4" r="2.304" fill="#fff" stroke="#9C9CA8" stroke-width="0.8"/><circle cx="6.4" cy="6.4" r="0.8960000000000001" fill="#C8C8D2"/></svg>
<svg style="left:601px;top:70px;" width="11" height="10" viewBox="0 0 11 10"><path d="M3.6 0.4 L4.8 3 L9.8 3.6 L6.4 5.6 L7 9.4 L4.2 6.6 L0.6 7.8 L2.4 4.8 L0.4 2.4 L3.4 2.8 Z" fill="#B02E48" stroke="#8E1F38" stroke-width="0.6"/></svg>
<svg style="left:730px;top:69px;" width="18" height="17" viewBox="0 0 18 17"><path d="M15.6 1.2 L9.2 6.4 L8 5.2 L5.2 8.4 L4.4 12.2 L8.2 14.4 L12.8 12 L13.6 9.4 L12.4 8.6 L13.4 7.4 L12 6.8 L16.8 2.6 Z" fill="#fff" stroke="#111" stroke-width="1" stroke-linejoin="round"/><path d="M12.4 8.6 L10.4 10 M13.4 7.4 L11 9" stroke="#111" stroke-width="0.7"/><path d="M4.2 11 L8.6 14.6 L5.8 16.6 L0.8 15.2 L1.2 12.4 Z" fill="#2536C8" stroke="#141C80" stroke-width="0.8"/></svg>
<svg style="left:20px;top:116.5px;" width="15" height="15" viewBox="0 0 15 15"><path d="M7.5 0.4 L11.2 3.8 L14.6 7.5 L11.2 11.2 L7.5 14.6 L3.8 11.2 L0.4 7.5 L3.8 3.8 Z" fill="#3C3C6E"/><path d="M3.2 3.2 L4.4 4.4 M11.8 3.2 L10.6 4.4 M3.2 11.8 L4.4 10.6 M11.8 11.8 L10.6 10.6" stroke="#A9A9F0" stroke-width="2"/><rect x="4.4" y="4.4" width="6.2" height="6.2" fill="#40406E" stroke="#E8E8FA" stroke-width="1.3"/><rect x="6.4" y="6.4" width="2.2" height="2.2" fill="#fff"/></svg>
<svg style="left:45px;top:117px;" width="14" height="14" viewBox="0 0 14 14"><g transform="scale(1.0)"><rect x="0.5" y="0.5" width="13" height="13" rx="2" fill="#8A2FA6" stroke="#5E1D78"/><path d="M7 2.2 L8.4 5.6 L12 5.8 L9.2 8.1 L10.2 11.6 L7 9.6 L3.8 11.6 L4.8 8.1 L2 5.8 L5.6 5.6 Z" fill="#fff"/></g></svg>
<svg style="left:76px;top:116px;" width="15" height="15" viewBox="0 0 15 15"><defs><linearGradient id="g8" x1="0" y1="0" x2="0" y2="1"><stop offset="0" stop-color="#F3EDC6"/><stop offset="1" stop-color="#D9CB86"/></linearGradient></defs><path d="M5.0 0.6 H10.0 V5.0 H14.4 V10.0 H10.0 V14.4 H5.0 V10.0 H0.6 V5.0 H5.0 Z" fill="url(#g8)" stroke="#B5A24E" stroke-width="1.2" stroke-linejoin="round"/></svg>
<svg style="left:114.5px;top:116.5px;" width="14" height="15" viewBox="0 0 14 15"><path d="M1.6 1 Q6 6 12.4 14 M12.4 1 Q7 7 1.4 14" stroke="#B84A5C" stroke-width="3.2" fill="none" stroke-linecap="round"/><path d="M1.6 1 Q6 6 12.4 14 M12.4 1 Q7 7 1.4 14" stroke="#D9707E" stroke-width="1.8" fill="none" stroke-linecap="round"/></svg>
<svg style="left:21px;top:142px;" width="15.0" height="15.0" viewBox="0 0 15.0 15.0"><defs><linearGradient id="g9" x1="0" y1="0" x2="1" y2="1"><stop offset="0" stop-color="#F4F4F6"/><stop offset="0.5" stop-color="#A4A4AE"/><stop offset="1" stop-color="#F4F4F6"/></linearGradient></defs><circle cx="7.5" cy="7.5" r="6.9" fill="url(#g9)" stroke="#8C8C96" stroke-width="1"/><circle cx="7.5" cy="7.5" r="2.6999999999999997" fill="#fff" stroke="#9C9CA8" stroke-width="0.8"/><circle cx="7.5" cy="7.5" r="1.05" fill="#C8C8D2"/></svg>
<div style="left:18px;top:149px;width:3px;height:1px;background:repeating-linear-gradient(90deg,#8A8A8A 0 1px,transparent 1px 2px);"></div>
<div style="left:29px;top:159px;width:1px;height:9px;background:repeating-linear-gradient(180deg,#8A8A8A 0 1px,transparent 1px 2px);"></div>
<svg style="left:24px;top:168px;" width="11" height="11" viewBox="0 0 11 11"><defs><linearGradient id="g10" x1="0" y1="0" x2="1" y2="1"><stop offset="0" stop-color="#FFFFFF"/><stop offset="1" stop-color="#D6D6D6"/></linearGradient></defs><rect x="0.5" y="0.5" width="10" height="10" rx="1.2" fill="url(#g10)" stroke="#9B9B9B"/><path d="M3 5.5 H8" stroke="#3C55B0" stroke-width="1.2"/></svg>
<div style="left:36px;top:173px;width:4px;height:1px;background:repeating-linear-gradient(90deg,#8A8A8A 0 1px,transparent 1px 2px);"></div>
<svg style="left:40px;top:165px;" width="16" height="14.5" viewBox="0 0 16 14.5"><defs><linearGradient id="g11" x1="0" y1="0" x2="0" y2="1"><stop offset="0" stop-color="#EEE6BE"/><stop offset="1" stop-color="#D9C894"/></linearGradient></defs><path d="M0.6 13.9 V2.2 Q0.6 0.6 2 0.6 H6.5 Q7.6 0.6 8 1.8 L8.4 2.8 H14 Q15.4 2.8 15.4 4.2 V13.9 Z" fill="url(#g11)" stroke="#B39A5E" stroke-width="1.2"/><path d="M1.2 5.6 H14.8" stroke="#B39A5E" stroke-width="0.9" opacity="0.75"/></svg>
<div style="left:48px;top:181px;width:1px;height:9px;background:repeating-linear-gradient(180deg,#8A8A8A 0 1px,transparent 1px 2px);"></div>
<svg style="left:43px;top:190px;" width="11" height="11" viewBox="0 0 11 11"><defs><linearGradient id="g12" x1="0" y1="0" x2="1" y2="1"><stop offset="0" stop-color="#FFFFFF"/><stop offset="1" stop-color="#D6D6D6"/></linearGradient></defs><rect x="0.5" y="0.5" width="10" height="10" rx="1.2" fill="url(#g12)" stroke="#9B9B9B"/><path d="M3 5.5 H8" stroke="#3C55B0" stroke-width="1.2"/></svg>
<div style="left:55px;top:195px;width:4px;height:1px;background:repeating-linear-gradient(90deg,#8A8A8A 0 1px,transparent 1px 2px);"></div>
<svg style="left:59px;top:186px;" width="16" height="15" viewBox="0 0 16 15"><rect x="0.6" y="3.2" width="12.6" height="11.2" rx="2.4" fill="#8C8CC6" stroke="#3E3E62" stroke-width="1.1"/><circle cx="4.2" cy="7.6" r="1.5" fill="#E6DE9A"/><circle cx="4.2" cy="11.6" r="1.5" fill="#E6DE9A"/><circle cx="8.8" cy="11.6" r="1.5" fill="#E6DE9A"/></svg>
<svg style="left:66px;top:186px;" width="9.5" height="9.5" viewBox="0 0 9.5 9.5"><g transform="scale(0.6785714285714286)"><rect x="0.5" y="0.5" width="13" height="13" rx="2" fill="#8A2FA6" stroke="#5E1D78"/><path d="M7 2.2 L8.4 5.6 L12 5.8 L9.2 8.1 L10.2 11.6 L7 9.6 L3.8 11.6 L4.8 8.1 L2 5.8 L5.6 5.6 Z" fill="#fff"/></g></svg>
<div style="left:67px;top:204px;width:1px;height:36px;background:repeating-linear-gradient(180deg,#8A8A8A 0 1px,transparent 1px 2px);"></div>
<div style="left:68px;top:217px;width:10px;height:1px;background:repeating-linear-gradient(90deg,#8A8A8A 0 1px,transparent 1px 2px);"></div>
<div style="left:68px;top:239px;width:10px;height:1px;background:repeating-linear-gradient(90deg,#8A8A8A 0 1px,transparent 1px 2px);"></div>
<svg style="left:78px;top:211.5px;" width="16" height="8" viewBox="0 0 16 8"><ellipse cx="4" cy="4" rx="3.2" ry="2.9" fill="none" stroke="#8A8A8A" stroke-width="1.7"/><ellipse cx="12" cy="4" rx="3.2" ry="2.9" fill="none" stroke="#8A8A8A" stroke-width="1.7"/><path d="M4 4 H12" stroke="#111" stroke-width="2"/></svg>
<svg style="left:79px;top:233px;" width="14" height="11" viewBox="0 0 14 11"><rect width="14" height="11" fill="#161616"/><rect x="1" y="3" width="12" height="5" fill="#A6DCA6"/><rect x="0.90" y="0.7" width="1.95" height="1.7" fill="#fff"/><rect x="0.90" y="8.60" width="1.95" height="1.7" fill="#fff"/><rect x="4.15" y="0.7" width="1.95" height="1.7" fill="#fff"/><rect x="4.15" y="8.60" width="1.95" height="1.7" fill="#fff"/><rect x="7.40" y="0.7" width="1.95" height="1.7" fill="#fff"/><rect x="7.40" y="8.60" width="1.95" height="1.7" fill="#fff"/><rect x="10.65" y="0.7" width="1.95" height="1.7" fill="#fff"/><rect x="10.65" y="8.60" width="1.95" height="1.7" fill="#fff"/></svg>
<svg style="left:298px;top:102px;" width="14" height="11" viewBox="0 0 14 11"><rect width="14" height="11" fill="#161616"/><rect x="1" y="3" width="12" height="5" fill="#A6DCA6"/><rect x="0.90" y="0.7" width="1.95" height="1.7" fill="#fff"/><rect x="0.90" y="8.60" width="1.95" height="1.7" fill="#fff"/><rect x="4.15" y="0.7" width="1.95" height="1.7" fill="#fff"/><rect x="4.15" y="8.60" width="1.95" height="1.7" fill="#fff"/><rect x="7.40" y="0.7" width="1.95" height="1.7" fill="#fff"/><rect x="7.40" y="8.60" width="1.95" height="1.7" fill="#fff"/><rect x="10.65" y="0.7" width="1.95" height="1.7" fill="#fff"/><rect x="10.65" y="8.60" width="1.95" height="1.7" fill="#fff"/></svg>
<svg style="left:446.59999999999997px;top:99.80000000000001px;" width="15.2" height="15.2" viewBox="0 0 15.2 15.2"><defs><linearGradient id="g13" x1="0" y1="0" x2="0" y2="1"><stop offset="0" stop-color="#FFFFFF"/><stop offset="1" stop-color="#C4C8EC"/></linearGradient></defs><circle cx="7.6" cy="7.6" r="6.8999999999999995" fill="url(#g13)" stroke="#8C8CE4" stroke-width="1.3"/><path d="M3.9999999999999996 9.6 L7.6 5.0 L11.2 9.6 Z" fill="#2E2E5E"/></svg>
<svg style="left:471.0px;top:99.80000000000001px;" width="15.2" height="15.2" viewBox="0 0 15.2 15.2"><defs><linearGradient id="g14" x1="0" y1="0" x2="0" y2="1"><stop offset="0" stop-color="#F4F4F4"/><stop offset="1" stop-color="#D0D0D0"/></linearGradient></defs><circle cx="7.6" cy="7.6" r="6.8999999999999995" fill="url(#g14)" stroke="#C4C4C4" stroke-width="1.3"/><path d="M9.4 3.9999999999999996 L5.0 7.6 L9.4 11.2 Z" fill="#8E8E8E"/></svg>
<svg style="left:494.7px;top:99.80000000000001px;" width="15.2" height="15.2" viewBox="0 0 15.2 15.2"><defs><linearGradient id="g15" x1="0" y1="0" x2="0" y2="1"><stop offset="0" stop-color="#F4F4F4"/><stop offset="1" stop-color="#D0D0D0"/></linearGradient></defs><circle cx="7.6" cy="7.6" r="6.8999999999999995" fill="url(#g15)" stroke="#C4C4C4" stroke-width="1.3"/><path d="M5.8 3.9999999999999996 L10.2 7.6 L5.8 11.2 Z" fill="#8E8E8E"/></svg>
<svg style="left:526px;top:98.5px;" width="18" height="18" viewBox="0 0 18 18"><defs><radialGradient id="g16" cx="0.5" cy="0.5" r="0.5"><stop offset="0" stop-color="#FFFFFF"/><stop offset="1" stop-color="#DCE0F4"/></radialGradient></defs><path d="M10.8 10.8 L16 16.6" stroke="#6E6E6E" stroke-width="2.6" stroke-linecap="round"/><circle cx="7" cy="7" r="6" fill="url(#g16)" stroke="#9A9A9A" stroke-width="1.3"/></svg>
<svg style="left:303px;top:133px;" width="14" height="13" viewBox="0 0 14 13"><path d="M2.3 2.3 L11.2 5 L8.8 6.8 L12.2 10.2 L10.6 11.8 L7.2 8.4 L5.2 10.6 Z" fill="#C8C8C8" stroke="#1a1a1a" stroke-width="0.9" stroke-linejoin="round"/></svg>
<svg style="left:325px;top:130.5px;" width="16.5" height="16.5" viewBox="0 0 16.5 16.5"><rect x="1.5" y="1.5" width="13.5" height="13.5" fill="#fff" stroke="#333" stroke-width="0.9"/><path d="M8.25 3.2 V13.3 M3.2 8.25 H13.3" stroke="#9A9AF0" stroke-width="1.8"/><path d="M8.25 2.6 L10.4 5 H6.1 Z M8.25 13.9 L10.4 11.5 H6.1 Z M2.6 8.25 L5 6.1 V10.4 Z M13.9 8.25 L11.5 6.1 V10.4 Z" fill="#9A9AF0"/><rect x="0.5" y="0.5" width="2" height="2" fill="#111"/><rect x="0.5" y="7.25" width="2" height="2" fill="#111"/><rect x="0.5" y="14" width="2" height="2" fill="#111"/><rect x="7.25" y="0.5" width="2" height="2" fill="#111"/><rect x="7.25" y="14" width="2" height="2" fill="#111"/><rect x="14" y="0.5" width="2" height="2" fill="#111"/><rect x="14" y="7.25" width="2" height="2" fill="#111"/><rect x="14" y="14" width="2" height="2" fill="#111"/></svg>
<svg style="left:302px;top:153px;" width="16" height="17" viewBox="0 0 16 17"><path d="M2 0.8 L9.6 5.4 L6.8 6.2 L9 9.4 L7.8 10.2 L5.6 7 L3.6 9 Z" fill="#fff" stroke="#333" stroke-width="0.9" stroke-linejoin="round"/><rect x="0.9" y="9.6" width="8" height="6" rx="3" fill="none" stroke="#9A9A9A" stroke-width="1.6"/><rect x="6.6" y="9.6" width="8" height="6" rx="3" fill="none" stroke="#9A9A9A" stroke-width="1.6"/><path d="M4.4 12.6 H11.2" stroke="#555" stroke-width="1.6"/></svg>
<svg style="left:301px;top:183px;" width="16" height="16" viewBox="0 0 16 16"><path d="M0.5 0 V16" stroke="#969696"/><rect x="2.5" y="2.5" width="6" height="4" fill="#EEEEEE" stroke="#BEBEBE" stroke-width="1"/><rect x="2.5" y="9.5" width="12.5" height="4.5" fill="#EEEEEE" stroke="#BEBEBE" stroke-width="1"/></svg>
<svg style="left:325px;top:183px;" width="16" height="16" viewBox="0 0 16 16"><path d="M0 0.5 H16" stroke="#969696"/><rect x="2.5" y="2.5" width="4" height="12" fill="#EEEEEE" stroke="#BEBEBE" stroke-width="1"/><rect x="9.5" y="2.5" width="4" height="6" fill="#EEEEEE" stroke="#BEBEBE" stroke-width="1"/></svg>
<svg style="left:301px;top:205px;" width="16" height="16" viewBox="0 0 16 16"><path d="M8.5 0 V16" stroke="#969696"/><rect x="5.5" y="2" width="6.5" height="4.5" fill="#EEEEEE" stroke="#BEBEBE" stroke-width="1"/><rect x="2.5" y="9" width="12.5" height="5" fill="#EEEEEE" stroke="#BEBEBE" stroke-width="1"/></svg>
<svg style="left:325px;top:205px;" width="16" height="16" viewBox="0 0 16 16"><path d="M0 7.5 H16" stroke="#969696"/><rect x="2.5" y="1" width="4" height="12" fill="#EEEEEE" stroke="#BEBEBE" stroke-width="1"/><rect x="9.5" y="4" width="4" height="6.5" fill="#EEEEEE" stroke="#BEBEBE" stroke-width="1"/></svg>
<svg style="left:301px;top:227px;" width="16" height="16" viewBox="0 0 16 16"><path d="M15.5 0 V16" stroke="#969696"/><rect x="7.5" y="2.5" width="6" height="4" fill="#EEEEEE" stroke="#BEBEBE" stroke-width="1"/><rect x="1.5" y="9.5" width="12" height="4" fill="#EEEEEE" stroke="#BEBEBE" stroke-width="1"/></svg>
<svg style="left:325px;top:227px;" width="16" height="16" viewBox="0 0 16 16"><path d="M0 14.5 H16" stroke="#969696"/><rect x="2.5" y="0.5" width="4" height="12" fill="#EEEEEE" stroke="#BEBEBE" stroke-width="1"/><rect x="9.5" y="6.5" width="4" height="6" fill="#EEEEEE" stroke="#BEBEBE" stroke-width="1"/></svg>
<svg style="left:301px;top:260px;" width="15" height="11" viewBox="0 0 15 11"><rect x="0.6" y="0.6" width="13.8" height="9.8" fill="#EEEEEE" stroke="#858585" stroke-width="1.2"/><path d="M3.4 5.5 H11.6" stroke="#BDBDBD" stroke-width="1.4"/><path d="M2.4 5.5 L5 3.4 V7.6 Z M12.6 5.5 L10 3.4 V7.6 Z" fill="#BDBDBD"/></svg>
<svg style="left:327px;top:257px;" width="11" height="15" viewBox="0 0 11 15"><rect x="0.6" y="0.6" width="9.8" height="13.8" fill="#EEEEEE" stroke="#858585" stroke-width="1.2"/><path d="M5.5 3.4 V11.6" stroke="#BDBDBD" stroke-width="1.4"/><path d="M5.5 2.4 L3.4 5 H7.6 Z M5.5 12.6 L3.4 10 H7.6 Z" fill="#BDBDBD"/></svg>
<svg style="left:301px;top:289px;" width="16" height="13" viewBox="0 0 16 13"><rect x="0.6" y="0.6" width="3" height="11.6" fill="#EEEEEE" stroke="#858585" stroke-width="1.1"/><rect x="12.4" y="0.6" width="3" height="11.6" fill="#EEEEEE" stroke="#858585" stroke-width="1.1"/><path d="M5 6.4 H11" stroke="#BDBDBD" stroke-width="1.6"/><path d="M8 6.4 L5 3.8 V9 Z M8 6.4 L11 3.8 V9 Z" fill="#BDBDBD"/></svg>
<svg style="left:326px;top:287px;" width="13" height="16" viewBox="0 0 13 16"><rect x="0.6" y="0.6" width="11.8" height="3" fill="#EEEEEE" stroke="#858585" stroke-width="1.1"/><rect x="0.6" y="12.4" width="11.8" height="3" fill="#EEEEEE" stroke="#858585" stroke-width="1.1"/><path d="M6.5 5 V11" stroke="#BDBDBD" stroke-width="1.6"/><path d="M6.5 8 L3.9 5 H9.1 Z M6.5 8 L3.9 11 H9.1 Z" fill="#BDBDBD"/></svg>
<svg style="left:301px;top:317px;" width="16" height="16" viewBox="0 0 16 16"><rect x="0.6" y="0.6" width="14.8" height="14.6" fill="#EEEEEE" stroke="#858585" stroke-width="1.2"/><path d="M2 8 H5.6 M10.4 8 H14" stroke="#BDBDBD" stroke-width="1.6"/><path d="M5.8 8 L3.4 5.6 V10.4 Z M10.2 8 L12.6 5.6 V10.4 Z" fill="#BDBDBD"/><rect x="6.4" y="2.6" width="3.2" height="10.8" fill="#EEEEEE" stroke="#6E6E6E" stroke-width="1.1"/></svg>
<svg style="left:325px;top:317px;" width="16" height="16" viewBox="0 0 16 16"><rect x="0.6" y="0.6" width="14.8" height="14.6" fill="#EEEEEE" stroke="#858585" stroke-width="1.2"/><path d="M8 2 V5.6 M8 10.4 V14" stroke="#BDBDBD" stroke-width="1.6"/><path d="M8 5.8 L5.6 3.4 H10.4 Z M8 10.2 L5.6 12.6 H10.4 Z" fill="#BDBDBD"/><rect x="2.6" y="6.4" width="10.8" height="3.2" fill="#EEEEEE" stroke="#6E6E6E" stroke-width="1.1"/></svg>
<svg style="left:34px;top:581.5px;" width="20" height="20.0" viewBox="0 0 20 20.0"><g transform="scale(1.0)"><rect x="0" y="1.5" width="19.6" height="17.5" fill="#2B7FA6"/><path d="M0 19 H19.6 V1.5" stroke="#1c2c3c" stroke-width="1.4" fill="none"/><ellipse cx="9.6" cy="10.6" rx="8.8" ry="6.6" fill="#E6E1C6" transform="rotate(-24 9.6 10.6)"/><path d="M11.5 17 Q17.5 14 18 6.5 L14 12 Z" fill="#B9B39A"/><path d="M5.6 8.4 L11 8 L10.2 12 L7.6 14.4 L4.4 12.2 Z" fill="#fff" stroke="#111" stroke-width="1"/><path d="M2 11 L5 10" stroke="#222" stroke-width="0.8"/><path d="M8 8.6 L15.6 1.2" stroke="#B8921E" stroke-width="2.6" stroke-linecap="round"/><path d="M8.8 8 L14.8 2" stroke="#E2C24A" stroke-width="0.9"/><circle cx="15.9" cy="0.9" r="1" fill="#E03030"/></g></svg>
<svg style="left:36px;top:610.5px;" width="20" height="20.0" viewBox="0 0 20 20.0"><g transform="scale(1.0)"><rect x="0" y="1.5" width="19.6" height="17.5" fill="#2B7FA6"/><path d="M0 19 H19.6 V1.5" stroke="#1c2c3c" stroke-width="1.4" fill="none"/><ellipse cx="9.6" cy="10.6" rx="8.8" ry="6.6" fill="#E6E1C6" transform="rotate(-24 9.6 10.6)"/><path d="M11.5 17 Q17.5 14 18 6.5 L14 12 Z" fill="#B9B39A"/><path d="M5.6 8.4 L11 8 L10.2 12 L7.6 14.4 L4.4 12.2 Z" fill="#fff" stroke="#111" stroke-width="1"/><path d="M2 11 L5 10" stroke="#222" stroke-width="0.8"/><path d="M8 8.6 L15.6 1.2" stroke="#B8921E" stroke-width="2.6" stroke-linecap="round"/><path d="M8.8 8 L14.8 2" stroke="#E2C24A" stroke-width="0.9"/><circle cx="15.9" cy="0.9" r="1" fill="#E03030"/></g></svg>
<div style="left:46px;top:631px;width:1px;height:77px;background:repeating-linear-gradient(180deg,#8A8A8A 0 1px,transparent 1px 2px);"></div>
<svg style="left:41px;top:638px;" width="11" height="11" viewBox="0 0 11 11"><defs><linearGradient id="g17" x1="0" y1="0" x2="1" y2="1"><stop offset="0" stop-color="#FFFFFF"/><stop offset="1" stop-color="#D6D6D6"/></linearGradient></defs><rect x="0.5" y="0.5" width="10" height="10" rx="1.2" fill="url(#g17)" stroke="#9B9B9B"/><path d="M3 5.5 H8" stroke="#3C55B0" stroke-width="1.2"/><path d="M5.5 3 V8" stroke="#3C55B0" stroke-width="1.2"/></svg>
<div style="left:52px;top:643px;width:6px;height:1px;background:repeating-linear-gradient(90deg,#8A8A8A 0 1px,transparent 1px 2px);"></div>
<div style="left:47px;top:665px;width:12px;height:1px;background:repeating-linear-gradient(90deg,#8A8A8A 0 1px,transparent 1px 2px);"></div>
<svg style="left:41px;top:682px;" width="11" height="11" viewBox="0 0 11 11"><defs><linearGradient id="g18" x1="0" y1="0" x2="1" y2="1"><stop offset="0" stop-color="#FFFFFF"/><stop offset="1" stop-color="#D6D6D6"/></linearGradient></defs><rect x="0.5" y="0.5" width="10" height="10" rx="1.2" fill="url(#g18)" stroke="#9B9B9B"/><path d="M3 5.5 H8" stroke="#3C55B0" stroke-width="1.2"/><path d="M5.5 3 V8" stroke="#3C55B0" stroke-width="1.2"/></svg>
<div style="left:52px;top:687px;width:6px;height:1px;background:repeating-linear-gradient(90deg,#8A8A8A 0 1px,transparent 1px 2px);"></div>
<div style="left:47px;top:708px;width:12px;height:1px;background:repeating-linear-gradient(90deg,#8A8A8A 0 1px,transparent 1px 2px);"></div>
<svg style="left:59px;top:633px;" width="20" height="20" viewBox="0 0 20 20"><defs><linearGradient id="g19" x1="0" y1="0" x2="1" y2="1"><stop offset="0" stop-color="#8FE0E6"/><stop offset="1" stop-color="#4FA6C4"/></linearGradient></defs><path d="M1 2 L3 0.6 H17 V12.6 H3 L1 14 Z" fill="#BEBEBE" stroke="#2A2A2A" stroke-width="0.8"/><rect x="3" y="0.6" width="14.4" height="12.2" fill="#E4E4E4" stroke="#2A2A2A" stroke-width="0.9"/><rect x="5" y="2.4" width="10.6" height="8.2" fill="url(#g19)" stroke="#0A0A0A" stroke-width="1.7"/><path d="M0.8 14.4 L2.6 13 H18 L19.4 14.6 V18.4 H2.2 L0.8 17 Z" fill="#E2E2E2" stroke="#1C1C1C" stroke-width="0.9"/><path d="M0.8 14.4 L2.2 15.8 H19.4 M2.2 15.8 V18.4" stroke="#1C1C1C" stroke-width="0.8" fill="none"/><path d="M4.4 17.2 H12" stroke="#fff" stroke-width="1"/><path d="M14 17 H17.4" stroke="#444" stroke-width="1.2"/></svg>
<svg style="left:60px;top:655.5px;" width="17" height="19" viewBox="0 0 17 19"><defs><linearGradient id="g20" x1="0" y1="0" x2="1" y2="0"><stop offset="0" stop-color="#FBE9A4"/><stop offset="1" stop-color="#E9C458"/></linearGradient></defs><path d="M0.6 2 L6 0.6 L7 16.6 L2 18.2 Z" fill="url(#g20)" stroke="#D9B850" stroke-width="0.6"/><path d="M5.4 3 L13.6 4.4 V17.6 L5.8 18.4 Z" fill="#F2F4F8" stroke="#C4C8D2" stroke-width="0.7"/><path d="M7.4 6.4 L12 7 M7.4 9 L12 9.6 M7.4 11.6 L12 12" stroke="#9FC0DC" stroke-width="0.9"/><path d="M2 18.2 L7 16.6 L9.6 18.6 L5 19 Z" fill="#E6C662"/></svg>
<svg style="left:59px;top:677px;" width="20" height="20" viewBox="0 0 20 20"><ellipse cx="5.6" cy="3" rx="4.4" ry="2.6" fill="#2E9E4A" stroke="#145A26" stroke-width="0.7"/><path d="M3 2.4 Q5.6 0.6 8.6 2.2" stroke="#D8F2DC" stroke-width="1" fill="none"/><rect x="10.2" y="1.6" width="9.2" height="7.2" fill="#D8D8D8" stroke="#1a1a1a" stroke-width="1"/><rect x="12" y="3" width="5.6" height="3.8" fill="#55B4CC" stroke="#111" stroke-width="0.8"/><path d="M10 10 H19.6 V11.6 H10 Z" fill="#C8C8C8" stroke="#222" stroke-width="0.7"/><rect x="1" y="5.6" width="11" height="9" fill="#E8E8E8" stroke="#1a1a1a" stroke-width="1"/><rect x="3" y="7.2" width="7" height="5.4" fill="#55B4CC" stroke="#111" stroke-width="0.9"/><path d="M0.6 15.4 H12.8 L14 17.4 V19.2 H1.8 L0.6 17.6 Z" fill="#CFCFCF" stroke="#222" stroke-width="0.8"/><path d="M14.6 12.6 V15.4 L19 16.8" stroke="#1C6E8E" stroke-width="1.1" fill="none"/></svg>
<svg style="left:59.5px;top:700px;" width="19" height="16" viewBox="0 0 19 16"><defs><linearGradient id="g21" x1="0" y1="0" x2="0" y2="1"><stop offset="0" stop-color="#F3EEC2"/><stop offset="1" stop-color="#E2D99C"/></linearGradient></defs><path d="M0.7 15.2 V2.2 Q0.7 0.7 2.2 0.7 H7 Q8.4 0.7 8.8 2 L9.2 3 H16.6 Q18.2 3 18.2 4.6 V15.2 Z" fill="url(#g21)" stroke="#5E5E30" stroke-width="1.2"/><path d="M17.4 4 V15 H1" stroke="#8A8A54" stroke-width="1.2" fill="none"/><path d="M9.2 5.6 V13.2 M5.4 9.4 H13 M6.6 6.8 L11.8 12 M11.8 6.8 L6.6 12" stroke="#2424D8" stroke-width="1.1"/></svg>
<svg style="left:252px;top:609px;" width="20" height="20" viewBox="0 0 20 20"><defs><linearGradient id="g22" x1="0" y1="0" x2="1" y2="1"><stop offset="0" stop-color="#8FE0E6"/><stop offset="1" stop-color="#4FA6C4"/></linearGradient></defs><path d="M1 2 L3 0.6 H17 V12.6 H3 L1 14 Z" fill="#BEBEBE" stroke="#2A2A2A" stroke-width="0.8"/><rect x="3" y="0.6" width="14.4" height="12.2" fill="#E4E4E4" stroke="#2A2A2A" stroke-width="0.9"/><rect x="5" y="2.4" width="10.6" height="8.2" fill="url(#g22)" stroke="#0A0A0A" stroke-width="1.7"/><path d="M0.8 14.4 L2.6 13 H18 L19.4 14.6 V18.4 H2.2 L0.8 17 Z" fill="#E2E2E2" stroke="#1C1C1C" stroke-width="0.9"/><path d="M0.8 14.4 L2.2 15.8 H19.4 M2.2 15.8 V18.4" stroke="#1C1C1C" stroke-width="0.8" fill="none"/><path d="M4.4 17.2 H12" stroke="#fff" stroke-width="1"/><path d="M14 17 H17.4" stroke="#444" stroke-width="1.2"/></svg>
<svg style="left:253px;top:631px;" width="17" height="19" viewBox="0 0 17 19"><defs><linearGradient id="g23" x1="0" y1="0" x2="1" y2="0"><stop offset="0" stop-color="#FBE9A4"/><stop offset="1" stop-color="#E9C458"/></linearGradient></defs><path d="M0.6 2 L6 0.6 L7 16.6 L2 18.2 Z" fill="url(#g23)" stroke="#D9B850" stroke-width="0.6"/><path d="M5.4 3 L13.6 4.4 V17.6 L5.8 18.4 Z" fill="#F2F4F8" stroke="#C4C8D2" stroke-width="0.7"/><path d="M7.4 6.4 L12 7 M7.4 9 L12 9.6 M7.4 11.6 L12 12" stroke="#9FC0DC" stroke-width="0.9"/><path d="M2 18.2 L7 16.6 L9.6 18.6 L5 19 Z" fill="#E6C662"/></svg>
<svg style="left:252px;top:651px;" width="20" height="20" viewBox="0 0 20 20"><ellipse cx="5.6" cy="3" rx="4.4" ry="2.6" fill="#2E9E4A" stroke="#145A26" stroke-width="0.7"/><path d="M3 2.4 Q5.6 0.6 8.6 2.2" stroke="#D8F2DC" stroke-width="1" fill="none"/><rect x="10.2" y="1.6" width="9.2" height="7.2" fill="#D8D8D8" stroke="#1a1a1a" stroke-width="1"/><rect x="12" y="3" width="5.6" height="3.8" fill="#55B4CC" stroke="#111" stroke-width="0.8"/><path d="M10 10 H19.6 V11.6 H10 Z" fill="#C8C8C8" stroke="#222" stroke-width="0.7"/><rect x="1" y="5.6" width="11" height="9" fill="#E8E8E8" stroke="#1a1a1a" stroke-width="1"/><rect x="3" y="7.2" width="7" height="5.4" fill="#55B4CC" stroke="#111" stroke-width="0.9"/><path d="M0.6 15.4 H12.8 L14 17.4 V19.2 H1.8 L0.6 17.6 Z" fill="#CFCFCF" stroke="#222" stroke-width="0.8"/><path d="M14.6 12.6 V15.4 L19 16.8" stroke="#1C6E8E" stroke-width="1.1" fill="none"/></svg>
<svg style="left:252.5px;top:673px;" width="19" height="16" viewBox="0 0 19 16"><defs><linearGradient id="g24" x1="0" y1="0" x2="0" y2="1"><stop offset="0" stop-color="#F3EEC2"/><stop offset="1" stop-color="#E2D99C"/></linearGradient></defs><path d="M0.7 15.2 V2.2 Q0.7 0.7 2.2 0.7 H7 Q8.4 0.7 8.8 2 L9.2 3 H16.6 Q18.2 3 18.2 4.6 V15.2 Z" fill="url(#g24)" stroke="#5E5E30" stroke-width="1.2"/><path d="M17.4 4 V15 H1" stroke="#8A8A54" stroke-width="1.2" fill="none"/><path d="M9.2 5.6 V13.2 M5.4 9.4 H13 M6.6 6.8 L11.8 12 M11.8 6.8 L6.6 12" stroke="#2424D8" stroke-width="1.1"/></svg>
<div style="left:253.5px;top:694px;width:17px;height:16px;background:#272B6C;border:1px solid #86B2EE;box-shadow:0 0 0 0.5px #B8D2F6;"><span class="t" style="left:2.2px;top:-2.6px;font-size:10.5px;line-height:20px;color:#A8C8F8;font-weight:bold;transform:scaleX(0.92)">Ps</span></div>
<div style="left:252.3px;top:714.5px;width:19.5px;height:19px;background:linear-gradient(#7DBEF6,#2E79D6 45%,#0F4FB0);border:1px solid #16408C;box-shadow:inset 0 0 0 0.6px #9CCBF8;"><span class="t" style="left:0px;top:-1.2px;font-size:16.5px;line-height:20px;color:#fff;font-weight:bold;letter-spacing:-1.5px;text-shadow:0 0 1px #123">64</span></div>
<svg style="left:256px;top:583.5px;" width="16" height="13.5" viewBox="0 0 16 13.5"><defs><linearGradient id="g25" x1="0" y1="0" x2="0" y2="1"><stop offset="0" stop-color="#EADFB2"/><stop offset="1" stop-color="#D6C48C"/></linearGradient></defs><path d="M0.6 12.9 V2.2 Q0.6 0.6 2 0.6 H6.5 Q7.6 0.6 8 1.8 L8.4 2.8 H14 Q15.4 2.8 15.4 4.2 V12.9 Z" fill="url(#g25)" stroke="#B39A5E" stroke-width="1.2"/><path d="M1.2 5.6 H14.8" stroke="#B39A5E" stroke-width="0.9" opacity="0.75"/></svg>
<svg style="left:258px;top:587px;" width="13" height="9" viewBox="0 0 13 9"><path d="M11.6 7.6 Q5.4 8.6 3.6 3.6" stroke="#2E3A7A" stroke-width="1.7" fill="none"/><path d="M3.6 0.6 L0.8 4.8 H6.6 Z" fill="#2E3A7A"/></svg>
<svg style="left:281px;top:582px;" width="14" height="15" viewBox="0 0 14 15"><defs><linearGradient id="g26" x1="0" y1="0" x2="1" y2="1"><stop offset="0" stop-color="#F2F3FC"/><stop offset="1" stop-color="#C4CAE8"/></linearGradient></defs><rect x="0.9" y="0.9" width="12.2" height="13.2" rx="2.4" fill="url(#g26)" stroke="#8A8AE8" stroke-width="1.5"/><path d="M3.6 6.6 Q4 3.6 7 3.6 Q9 3.6 9.8 5" stroke="#3A3A5A" stroke-width="1.5" fill="none"/><path d="M10.9 2.6 V6.4 H7.4 Z" fill="#3A3A5A"/><path d="M10.4 8.4 Q10 11.4 7 11.4 Q5 11.4 4.2 10" stroke="#3A3A5A" stroke-width="1.5" fill="none"/><path d="M3.1 12.4 V8.6 H6.6 Z" fill="#3A3A5A"/></svg>
<svg style="left:309.5px;top:585px;" width="14" height="11.5" viewBox="0 0 14 11.5"><defs><linearGradient id="g27" x1="0" y1="0" x2="0" y2="1"><stop offset="0" stop-color="#CDCDCD"/><stop offset="1" stop-color="#BDBDBD"/></linearGradient></defs><path d="M0.6 10.9 V2.2 Q0.6 0.6 2 0.6 H6.5 Q7.6 0.6 8 1.8 L8.4 2.8 H12 Q13.4 2.8 13.4 4.2 V10.9 Z" fill="url(#g27)" stroke="#AFAFAF" stroke-width="1.2"/><path d="M1.2 5.6 H12.8" stroke="#AFAFAF" stroke-width="0.9" opacity="0.75"/></svg>
<svg style="left:318px;top:581px;" width="9" height="10" viewBox="0 0 9 10"><path d="M4.5 0 V10 M0 5 H9 M1.4 1.8 L7.6 8.2 M7.6 1.8 L1.4 8.2" stroke="#BDBDBD" stroke-width="1"/></svg>
<svg style="left:333.5px;top:582px;" width="14" height="15" viewBox="0 0 14 15"><path d="M1.6 1 Q6 6 12.4 14 M12.4 1 Q7 7 1.4 14" stroke="#B2B2B2" stroke-width="3.2" fill="none" stroke-linecap="round"/><path d="M1.6 1 Q6 6 12.4 14 M12.4 1 Q7 7 1.4 14" stroke="#C9C9C9" stroke-width="1.8" fill="none" stroke-linecap="round"/></svg>
<svg style="left:356px;top:584px;" width="16" height="12.5" viewBox="0 0 16 12.5"><defs><linearGradient id="g28" x1="0" y1="0" x2="0" y2="1"><stop offset="0" stop-color="#CFCFCF"/><stop offset="1" stop-color="#BFBFBF"/></linearGradient></defs><path d="M0.6 11.9 V2.2 Q0.6 0.6 2 0.6 H6.5 Q7.6 0.6 8 1.8 L8.4 2.8 H14 Q15.4 2.8 15.4 4.2 V11.9 Z" fill="url(#g28)" stroke="#AFAFAF" stroke-width="1.2"/><path d="M1.2 5.6 H14.8" stroke="#AFAFAF" stroke-width="0.9" opacity="0.75"/></svg>
<svg style="left:389.5px;top:584px;" width="13" height="11" viewBox="0 0 13 11"><defs><linearGradient id="g29" x1="0" y1="0" x2="1" y2="0"><stop offset="0" stop-color="#B8B8B8"/><stop offset="1" stop-color="#8C8C8C"/></linearGradient></defs><path d="M0.5 0.3 L12.6 5.5 L0.5 10.7 Z" fill="url(#g29)"/></svg>
<svg style="left:413.5px;top:584px;" width="11" height="11" viewBox="0 0 11 11"><defs><linearGradient id="g30" x1="0" y1="0" x2="1" y2="1"><stop offset="0" stop-color="#A6A6A6"/><stop offset="1" stop-color="#7E7E7E"/></linearGradient></defs><rect width="11" height="11" fill="url(#g30)"/></svg>
<svg style="left:434px;top:581px;" width="17" height="19" viewBox="0 0 17 19"><path d="M9.4 1.2 L16.4 4.2 L9.4 7.6 Z" fill="#1E9E50" stroke="#137238" stroke-width="0.7"/><path d="M9.4 1 V9" stroke="#137238" stroke-width="1"/><path d="M1.2 5.4 L10.6 10.4 L7 11.4 L10.4 16.2 L8.8 17.4 L5.4 12.6 L3.2 15.2 Z" fill="#C9C9C9" stroke="#1a1a1a" stroke-width="1" stroke-linejoin="round"/></svg>
<svg style="left:465px;top:583px;" width="17" height="14" viewBox="0 0 17 14"><defs><linearGradient id="g31" x1="0" y1="0" x2="1" y2="1"><stop offset="0" stop-color="#FFFFFF"/><stop offset="1" stop-color="#D3D8F0"/></linearGradient></defs><rect x="0.9" y="0.9" width="15.2" height="12.2" rx="2" fill="url(#g31)" stroke="#8A8AE8" stroke-width="1.5"/><path d="M0.9 3 H16.1" stroke="#8A8AE8" stroke-width="1.6"/><path d="M3 5.6 H5 M3 8.2 H5 M3 10.8 H5 M9.4 5.6 H11.4 M9.4 8.2 H11.4 M9.4 10.8 H11.4" stroke="#1c1c2c" stroke-width="1.5"/><path d="M5.8 5.6 H7.8 M5.8 8.2 H7.8 M5.8 10.8 H7.8 M12.2 5.6 H14.2 M12.2 8.2 H14.2 M12.2 10.8 H14.2" stroke="#8888A8" stroke-width="1"/></svg>
<svg style="left:538px;top:580.5px;" width="8" height="8" viewBox="0 0 8 8"><defs><linearGradient id="g32" x1="0" y1="0" x2="0" y2="1"><stop offset="0" stop-color="#FBF8DC"/><stop offset="1" stop-color="#EDE4A8"/></linearGradient></defs><path d="M2.8 0.6 H5.2 V2.8 H7.4 V5.2 H5.2 V7.4 H2.8 V5.2 H0.6 V2.8 H2.8 Z" fill="url(#g32)" stroke="#A8962E" stroke-width="1.1" stroke-linejoin="round"/></svg>
<svg style="left:545.4px;top:581.6px;" width="8.6" height="13.6" viewBox="0 0 8.6 13.6"><defs><linearGradient id="g33" x1="0" y1="0" x2="1" y2="1"><stop offset="0" stop-color="#D89A62"/><stop offset="1" stop-color="#9C5E2E"/></linearGradient></defs><path d="M0.4 0.5 H8.2 Q8.2 6.12 0.6 13.299999999999999 Z" fill="url(#g33)" stroke="#8A5428" stroke-width="0.7"/><path d="M3.87 2 H6.6" stroke="#F2D2B0" stroke-width="1"/></svg>
<svg style="left:570px;top:585px;" width="17" height="11" viewBox="0 0 17 11"><defs><linearGradient id="g34" x1="0" y1="0" x2="0" y2="1"><stop offset="0" stop-color="#F0E6BC"/><stop offset="1" stop-color="#D8C68C"/></linearGradient></defs><path d="M1.6 10.2 V2.4 Q1.6 0.8 3 0.8 H6 L7 2.2 H13 Q14.4 2.2 14.4 3.6 V5" fill="#D8C890" stroke="#B39A5E" stroke-width="1.1"/><path d="M0.7 10.3 L3.4 4.8 H16.3 L13.8 10.3 Z" fill="url(#g34)" stroke="#B39A5E" stroke-width="1.1" stroke-linejoin="round"/></svg>
<svg style="left:576.4px;top:579.6px;" width="6" height="10.6" viewBox="0 0 6 10.6"><defs><linearGradient id="g35" x1="0" y1="0" x2="1" y2="1"><stop offset="0" stop-color="#D89A62"/><stop offset="1" stop-color="#9C5E2E"/></linearGradient></defs><path d="M0.4 0.5 H5.6 Q5.6 4.77 0.6 10.299999999999999 Z" fill="url(#g35)" stroke="#8A5428" stroke-width="0.7"/><path d="M2.7 2 H4" stroke="#F2D2B0" stroke-width="1"/></svg>
<svg style="left:595px;top:582.5px;" width="14" height="13.4" viewBox="0 0 14 13.4"><rect x="0.5" y="0.5" width="13" height="12.4" rx="2" fill="#6A6A6E" stroke="#57575B"/><rect x="2.8" y="1.2" width="8.4" height="6.7" fill="#fff"/><rect x="3.2" y="8.8" width="7.6" height="3" fill="#0b0b0b"/><rect x="8" y="8.8" width="1.8" height="3" fill="#fff"/></svg>
<svg style="left:599px;top:579.6px;" width="6.4" height="9.8" viewBox="0 0 6.4 9.8"><defs><linearGradient id="g36" x1="0" y1="0" x2="1" y2="1"><stop offset="0" stop-color="#D89A62"/><stop offset="1" stop-color="#9C5E2E"/></linearGradient></defs><path d="M0.4 0.5 H6.0 Q6.0 4.41 0.6 9.5 Z" fill="url(#g36)" stroke="#8A5428" stroke-width="0.7"/><path d="M2.8800000000000003 2 H4.4" stroke="#F2D2B0" stroke-width="1"/></svg>
<svg style="left:626px;top:580px;" width="18" height="18" viewBox="0 0 18 18"><rect x="1.2" y="7.8" width="3.8" height="8.6" fill="#B4B4B4"/><path d="M0.4 7.6 H5.8 M0.4 16.6 H5.8" stroke="#1a1a1a" stroke-width="1.1"/><path d="M6.4 1 V17.2" stroke="#4A4AE0" stroke-width="1.1"/><path d="M8.8 3.6 H14.6" stroke="#1E2460" stroke-width="1.3"/><path d="M7.4 3.6 L10.6 1.2 V6 Z" fill="#1E2460"/><rect x="8.8" y="8" width="8" height="8.6" fill="#6FE87C"/><path d="M17 8 H8.8 V16.6 H17" stroke="#5050F0" stroke-width="1.1" fill="none"/></svg>
<svg style="left:650px;top:579.5px;" width="18" height="18" viewBox="0 0 18 18"><rect x="1.4" y="6.4" width="11.4" height="10" fill="#6FE27C" stroke="#5A6AE8" stroke-width="1.2"/><path d="M4.4 12.4 H11.6" stroke="#1E2A70" stroke-width="1.6"/><path d="M2.8 12.4 L6.2 9.6 V15.2 Z" fill="#1E2A70"/><circle cx="12.6" cy="5.4" r="4.4" fill="#fff" stroke="#333" stroke-width="1"/><path d="M12.6 2.8 V5.6 H14.8" stroke="#333" stroke-width="0.9" fill="none"/></svg>
<svg style="left:673.5px;top:582.5px;" width="20" height="14" viewBox="0 0 20 14"><path d="M5.4 2 V11.8 M0.6 6.9 H10.2" stroke="#1F8F3A" stroke-width="1.1"/><path d="M2.6 4.1 L8.2 9.7 M8.2 4.1 L2.6 9.7" stroke="#4A5CF0" stroke-width="1"/><circle cx="5.4" cy="6.9" r="1.1" fill="#38C8D8"/><path d="M8 2.3 L15.8 6.2 L13.4 7.5 L17.6 10.7 L16.2 12.3 L12 8.9 L10.3 10.6 Z" fill="#DADADA" stroke="#1a1a1a" stroke-width="0.9" stroke-linejoin="round"/></svg>
<svg style="left:706px;top:581px;" width="15.5" height="14" viewBox="0 0 15.5 14"><rect x="0.8" y="3.4" width="13.8" height="10" fill="#B9E8B9" stroke="#8486DC" stroke-width="1.2"/><path d="M0.5 6 V0.5 H6.2 Z" fill="#D8CE78" stroke="#8E8A48" stroke-width="0.7"/></svg>
<svg style="left:731px;top:581px;" width="15.5" height="14" viewBox="0 0 15.5 14"><rect x="0.8" y="3.4" width="13.8" height="10" fill="#B9E8B9" stroke="#8486DC" stroke-width="1.2"/><path d="M9.4 0.5 H15 V6 Z" fill="#D8CE78" stroke="#8E8A48" stroke-width="0.7"/></svg>
<svg style="left:754px;top:582.5px;" width="16" height="13" viewBox="0 0 16 13"><circle cx="7" cy="6.5" r="5.2" fill="none" stroke="#BDBDBD" stroke-width="2.2"/><circle cx="7" cy="6.5" r="1.9" fill="#ADADAD"/><path d="M10.4 6.4 H15.6 L13 10.4 Z" fill="#BDBDBD"/><rect x="9.6" y="6.6" width="4" height="3.4" fill="#F0F0F0"/><path d="M10.6 6.2 H15.6 L13.1 10 Z" fill="#BDBDBD"/></svg>
<svg style="left:539px;top:645px;" width="32" height="25" viewBox="0 0 32 25"><rect x="2" y="2" width="3.4" height="3.4" fill="#fff"/><g transform="translate(12.6 13.2) rotate(-40)"><rect x="-10" y="-5.6" width="20" height="11.2" fill="none" stroke="#E8ECF6" stroke-width="1.7"/><path d="M-9.4 -3.4 H9.4 M-9.4 3.4 H9.4" stroke="#E8ECF6" stroke-width="1.5" stroke-dasharray="1.4 1.4"/><path d="M-3.4 -2.6 V2.6 M3.4 -2.6 V2.6" stroke="#E8ECF6" stroke-width="1.6"/></g></svg>
<span id="t50" class="t" style="left:563px;top:644.73px;font-size:15.5px;line-height:20px;color:#fff;">1</span>
<svg style="left:542px;top:688px;" width="14" height="19" viewBox="0 0 14 19"><path d="M0.6 6.4 H4 L10 0.6 V18.4 L4 12.6 H0.6 Z" fill="#F0D8DC" opacity="0.9"/><path d="M4 6.4 V12.6" stroke="#B88890" stroke-width="0.8"/></svg>
<span id="t51" class="t" style="left:563px;top:685.53px;font-size:15.5px;line-height:20px;color:#fff;">1</span>
<svg style="left:707px;top:647.5px;" width="13.5" height="10" viewBox="0 0 13.5 10"><rect width="13.5" height="10" fill="#161616"/><rect x="1" y="3" width="11.5" height="4" fill="#7FE08A"/><rect x="0.90" y="0.7" width="1.82" height="1.7" fill="#fff"/><rect x="0.90" y="7.60" width="1.82" height="1.7" fill="#fff"/><rect x="4.03" y="0.7" width="1.82" height="1.7" fill="#fff"/><rect x="4.03" y="7.60" width="1.82" height="1.7" fill="#fff"/><rect x="7.15" y="0.7" width="1.82" height="1.7" fill="#fff"/><rect x="7.15" y="7.60" width="1.82" height="1.7" fill="#fff"/><rect x="10.28" y="0.7" width="1.82" height="1.7" fill="#fff"/><rect x="10.28" y="7.60" width="1.82" height="1.7" fill="#fff"/></svg>
<svg style="left:708px;top:686px;" width="11" height="13" viewBox="0 0 11 13"><path d="M0.8 4.2 H3.6 L8.6 0.6 V12.4 L3.6 8.8 H0.8 Z" fill="#5A5A5A" stroke="#333" stroke-width="0.7"/><path d="M9.6 1 V12" stroke="#333" stroke-width="0.8"/></svg>
<svg style="left:735px;top:603.4px;" width="9.4" height="15" viewBox="0 0 9.4 15"><path d="M0 0 H9 V5.2 L0 14.4 Z" fill="#DE8C4E" stroke="#C07A40" stroke-width="0.5"/></svg>
<svg style="left:735px;top:624px;" width="11" height="11" viewBox="0 0 11 11"><path d="M0 0 H10 L0 10 Z" fill="#FFF200"/><path d="M10.4 0 L0 10.4" stroke="#222" stroke-width="1"/></svg>
<svg style="left:827.6px;top:624px;" width="11" height="11" viewBox="0 0 11 11"><path d="M0.4 0 H10.4 V10 Z" fill="#FFF200"/><path d="M0 0 L10.4 10.4" stroke="#222" stroke-width="1"/></svg>
<div style="left:755px;top:636px;width:1px;height:3px;background:#9A9A9A;"></div>
<div style="left:776px;top:636px;width:1px;height:3px;background:#9A9A9A;"></div>
<div style="left:796px;top:636px;width:1px;height:3px;background:#9A9A9A;"></div>
<div style="left:817px;top:636px;width:1px;height:3px;background:#9A9A9A;"></div>
<div style="left:736px;top:638px;width:102px;height:1px;background:#B0B0B0;"></div>
<div style="left:737px;top:644px;width:42px;height:31px;background:#121212;"></div>
<svg style="left:745px;top:644px" width="26" height="31" viewBox="0 0 133 162" preserveAspectRatio="none"><defs>
<linearGradient id="apsky" x1="0" y1="0" x2="0" y2="1"><stop offset="0" stop-color="#6E8FD6"/><stop offset="0.4" stop-color="#94AADE"/><stop offset="1" stop-color="#CCD3EA"/></linearGradient>
<linearGradient id="aplake" x1="0" y1="0" x2="0" y2="1"><stop offset="0" stop-color="#1A2842"/><stop offset="0.16" stop-color="#20304F"/><stop offset="0.3" stop-color="#34508E"/><stop offset="0.55" stop-color="#4664AC"/><stop offset="0.75" stop-color="#3C58A2"/><stop offset="1" stop-color="#2B4290"/></linearGradient>
<radialGradient id="aplight" cx="0.7" cy="0.55" r="0.45"><stop offset="0" stop-color="#7F9AD4" stop-opacity="0.7"/><stop offset="1" stop-color="#7F9AD4" stop-opacity="0"/></radialGradient>
<linearGradient id="apdock" x1="0" y1="0" x2="0" y2="1"><stop offset="0" stop-color="#BEB7C1"/><stop offset="0.45" stop-color="#AEA7B3"/><stop offset="1" stop-color="#9A94A3"/></linearGradient>
<linearGradient id="apvest" x1="0" y1="0" x2="1" y2="1"><stop offset="0" stop-color="#3C8CE4"/><stop offset="1" stop-color="#1F64C2"/></linearGradient>
<linearGradient id="apcat" x1="0" y1="0" x2="1" y2="0"><stop offset="0" stop-color="#D99A58"/><stop offset="1" stop-color="#EDC49A"/></linearGradient>
<linearGradient id="aptree" x1="0" y1="0" x2="1" y2="0"><stop offset="0" stop-color="#263A38"/><stop offset="0.5" stop-color="#2B4236"/><stop offset="1" stop-color="#344E38"/></linearGradient>
<linearGradient id="aptreehl" x1="0" y1="0" x2="1" y2="0"><stop offset="0" stop-color="#54753F" stop-opacity="0"/><stop offset="0.4" stop-color="#4E6E40" stop-opacity="0.45"/><stop offset="1" stop-color="#587844" stop-opacity="0.6"/></linearGradient>
<filter id="apb1" x="-10%" y="-10%" width="120%" height="120%"><feGaussianBlur stdDeviation="0.6"/></filter>
<filter id="apb2" x="-20%" y="-20%" width="140%" height="140%"><feGaussianBlur stdDeviation="1.8"/></filter>
<clipPath id="apclip"><rect width="133" height="162"/></clipPath>
</defs>
<g clip-path="url(#apclip)">
<rect width="133" height="34" fill="url(#apsky)"/>
<g filter="url(#apb2)"><ellipse cx="34" cy="5" rx="30" ry="3.4" fill="#DCE2F4" opacity="0.8"/><ellipse cx="16" cy="15" rx="30" ry="6" fill="#D8DCF0" opacity="0.85"/><ellipse cx="66" cy="9" rx="16" ry="2.6" fill="#D0D8F0" opacity="0.6"/><ellipse cx="94" cy="10" rx="10" ry="1.6" fill="#C6D0EC" opacity="0.6"/></g>
<rect y="31" width="133" height="62" fill="url(#aplake)"/>
<rect y="36" width="133" height="40" fill="url(#aplight)"/>
<g filter="url(#apb1)">
<path d="M0 22.4 L8 22 L16 22.6 L24 21 L32 20.4 L37 19 L42 17.6 L48 17 L54 15.4 L60 14.6 L66 13.6 L71 12.4 L76 13.6 L82 13 L88 14 L94 13.2 L99 12.4 L104 13.2 L110 14 L116 13 L122 13.8 L128 13 L133 13.6 V31.4 H0 Z" fill="url(#aptree)"/>
<path d="M56 16.6 L60 15.6 L66 14.6 L71 13.4 L76 14.6 L82 14 L88 15 L94 14.2 L99 13.4 L104 14.2 L110 15 L116 14 L122 14.8 L128 14 L133 14.6 V19 L100 21 L56 19 Z" fill="url(#aptreehl)"/>
<path d="M0 31.2 H133 V32.2 H0 Z" fill="#7E8AA0" opacity="0.7"/>
<path d="M0 32.4 H133 V47 L112 48 L96 46 L74 47.4 L50 43 L24 42.4 L0 41 Z" fill="#1A263E" opacity="0.6" filter="url(#apb2)"/>
</g>
<path d="M125.6 0 H133 V31 Q128.6 18 125.6 0 Z" fill="#16223E"/>
<path d="M108.2 11.1 L122.6 6.7 L119.8 0" stroke="#1A2030" stroke-width="1.4" fill="none"/>
<path d="M0 89.8 L22.6 72.8 H120.6 L133 79.6 V162 H0 Z" fill="url(#apdock)"/>
<path d="M0 89.8 L22.6 72.8 M120.6 72.8 L133 79.6" stroke="#6E6880" stroke-width="1"/>
<g stroke="#81798F" stroke-width="0.6" opacity="0.85"><path d="M19 75.8 H126 M14 79.4 H132 M9 83.4 H133 M3 87.8 H133 M0 92.6 H133 M0 97.8 H133 M0 103.4 H133 M0 109.4 H133 M0 115.8 H133 M0 122.6 H133 M0 129.8 H133 M0 137.4 H133 M0 145.6 H133 M0 154.2 H133"/></g>
<g filter="url(#apb2)"><path d="M0 118 L30 120 L30 124 L0 123 Z" fill="#4A4460" opacity="0.7"/><path d="M0 134 L40 136 L66 130 L94 135 L98 150 L62 157 L0 153 Z" fill="#453F5A" opacity="0.7"/><path d="M0 154 L133 156 V162 H0 Z" fill="#5A546A" opacity="0.35"/></g>
<g filter="url(#apb1)">
<path d="M42 0 L39.4 18 L40 30" stroke="#2A2A36" stroke-width="0.9" fill="none"/>
<!-- boy arms / head -->
<path d="M19.4 63 Q18 58 23 51 L31 39 Q33 36 36 38 L37 43 L31 55 L30 66 Z" fill="#C89878"/>
<path d="M65.4 66 Q67 60 62 52 L53 41 L49 43 L53 56 L56 68 Z" fill="#C89878"/>
<ellipse cx="46" cy="52" rx="9.2" ry="10.6" fill="#DAAA90"/>
<path d="M35.4 43 Q35 29.4 46 28.2 Q57.6 28.6 57.2 44 Q52 38 46.4 40 Q41 40 35.4 43 Z" fill="#9C8062"/>
<path d="M44 30 Q50 29 54 33 L52 36 Q48 33 44 33 Z" fill="#C2A884" opacity="0.8"/>
<path d="M35.8 30 H44.6 V44.6 L39.6 46.6 L35.8 43 Z" fill="#1C1C24"/>
<path d="M35 46.4 Q44 50.4 55 45.4" stroke="#1C1C24" stroke-width="1.5" fill="none"/>
<path d="M42.4 55 Q46 58 49.6 55" stroke="#8A4A40" stroke-width="1" fill="none"/>
<!-- vest -->
<path d="M29 58 Q35 54.6 40 58.6 L45.6 65.6 L52 58 Q58 55 64.4 61 L69 107.6 Q50 115 27 113.6 L25 84 Z" fill="url(#apvest)"/>
<path d="M21 64 L29 58 L31.6 69 L24 71 Z" fill="#5E5238"/><path d="M62.4 59.4 L67 65 L63.4 71 L58 69 Z" fill="#564A32"/>
<path d="M29.6 68 Q35 64 40.4 69 L40 77 L31 79 Z" fill="#DDE8F4" opacity="0.85"/><path d="M50 63 L56 61 L56 70 L50 72 Z" fill="#C6DCF2" opacity="0.65"/>
<path d="M43 74.6 L64.6 73.6 L65 77.6 L43 78.8 Z" fill="#A2A8BA"/><path d="M46 89.8 L66.9 84.6 L67.6 89 L46.4 94.6 Z" fill="#A2A8BA"/><path d="M48.3 102.5 L68.7 96.5 L69.2 101 L48.6 107.4 Z" fill="#A2A8BA"/>
<path d="M37 70 L39.4 113" stroke="#1A2A50" stroke-width="1.6"/><path d="M27.6 85 L37 82.6 M28 97 L39 95.6" stroke="#16264A" stroke-width="1.8"/>
<path d="M31 96 L35 96 L35.6 113 L31.4 112 Z" fill="#E8ECF0" opacity="0.85"/>
<!-- shorts / legs -->
<path d="M30.4 112 Q50 117 66.4 108.6 L67.8 135 Q60 139 52.4 137.4 L49.8 121 L46.2 138 Q38 140.4 29.6 136 Z" fill="#937B52"/>
<path d="M31 114 Q36.4 128 31 136" stroke="#71603E" stroke-width="1.2" fill="none"/><path d="M58 112 Q62 124 60 137" stroke="#A88E62" stroke-width="1.6" fill="none"/>
<path d="M36.4 138.6 L43.8 139.4 L42.8 150 L41 157.4 Q36 160.6 30.6 157.6 L36.6 150 Z" fill="#D9A88E"/>
<path d="M51.3 138.4 L59.4 137.8 L58.6 152 L60 159.4 Q55.6 162 50.6 160 L52.2 152 Z" fill="#D9A88E"/>
<!-- fish -->
<path d="M105.8 78.8 Q112 78 118 83.6 L128.6 91.6 L124 93.6 Q114 96.6 109 89.6 Q106 84.6 105.8 78.8 Z" fill="#525A62"/><path d="M110 85 Q116 89 122 92.4 Q114 94.6 110 89 Z" fill="#C6CCD2" opacity="0.8"/><path d="M116 82 L124.6 84.4 L120 88 Z" fill="#2A3036"/>
<!-- cat -->
<path d="M85.8 99 Q90.6 96 94.6 103 Q98.6 113 103.4 119 L99 128 Q92 121 88 109 Q84.6 102 85.8 99 Z" fill="#D4924E"/><ellipse cx="88" cy="99.6" rx="3.2" ry="2.6" fill="#F6EEE4"/>
<path d="M100.2 80.6 Q104 78.4 105.2 83 L108 104 L109.4 114 L103.6 114 L101.6 95 Z" fill="#EBC39C"/><ellipse cx="102.6" cy="80.8" rx="2.8" ry="2.4" fill="#F2DAC4"/>
<path d="M96 124 Q98.6 109 111 106.6 Q123 104.6 126 112.6 L126 128 L123 146 L117 149 L99 149 Q93 139 96 124 Z" fill="url(#apcat)"/>
<path d="M111 97.6 L115.4 101.6 Q121 98.6 125.6 101.4 L128.6 96.6 L129 108.6 Q126 115.6 118.4 114.8 Q111.6 112 111 104 Z" fill="#E2AA74"/>
<path d="M114.6 106.4 Q120.6 111 127 106.4" stroke="#F8EAD8" stroke-width="2" fill="none"/>
<path d="M103.6 113 Q112 107 119.6 114 L120.6 140 Q112 148 103.6 141 Z" fill="#F4EEE8"/>
<path d="M119.6 122 L124.6 124 L128.4 139 L127.4 145.6 L123.6 145 L120.6 131 Z" fill="#DDA26A"/><ellipse cx="126.8" cy="142" rx="2.4" ry="3.6" fill="#FAF6F0"/>
<path d="M95 147 L101 146.6 L100 153 L94.6 153.6 Z" fill="#F6F0EA"/><path d="M117 146.6 L122.6 145 L127.6 151 L122.6 153.6 Z" fill="#F6F0EA"/>
</g>
</g></svg>
<div style="left:794.2px;top:644px;width:42px;height:31px;background:#121212;"></div>
<svg style="left:802.2px;top:644px" width="26" height="31" viewBox="0 0 133 162" preserveAspectRatio="none"><defs>
<linearGradient id="bpsky" x1="0" y1="0" x2="0" y2="1"><stop offset="0" stop-color="#6E8FD6"/><stop offset="0.4" stop-color="#94AADE"/><stop offset="1" stop-color="#CCD3EA"/></linearGradient>
<linearGradient id="bplake" x1="0" y1="0" x2="0" y2="1"><stop offset="0" stop-color="#1A2842"/><stop offset="0.16" stop-color="#20304F"/><stop offset="0.3" stop-color="#34508E"/><stop offset="0.55" stop-color="#4664AC"/><stop offset="0.75" stop-color="#3C58A2"/><stop offset="1" stop-color="#2B4290"/></linearGradient>
<radialGradient id="bplight" cx="0.7" cy="0.55" r="0.45"><stop offset="0" stop-color="#7F9AD4" stop-opacity="0.7"/><stop offset="1" stop-color="#7F9AD4" stop-opacity="0"/></radialGradient>
<linearGradient id="bpdock" x1="0" y1="0" x2="0" y2="1"><stop offset="0" stop-color="#BEB7C1"/><stop offset="0.45" stop-color="#AEA7B3"/><stop offset="1" stop-color="#9A94A3"/></linearGradient>
<linearGradient id="bpvest" x1="0" y1="0" x2="1" y2="1"><stop offset="0" stop-color="#3C8CE4"/><stop offset="1" stop-color="#1F64C2"/></linearGradient>
<linearGradient id="bpcat" x1="0" y1="0" x2="1" y2="0"><stop offset="0" stop-color="#D99A58"/><stop offset="1" stop-color="#EDC49A"/></linearGradient>
<linearGradient id="bptree" x1="0" y1="0" x2="1" y2="0"><stop offset="0" stop-color="#263A38"/><stop offset="0.5" stop-color="#2B4236"/><stop offset="1" stop-color="#344E38"/></linearGradient>
<linearGradient id="bptreehl" x1="0" y1="0" x2="1" y2="0"><stop offset="0" stop-color="#54753F" stop-opacity="0"/><stop offset="0.4" stop-color="#4E6E40" stop-opacity="0.45"/><stop offset="1" stop-color="#587844" stop-opacity="0.6"/></linearGradient>
<filter id="bpb1" x="-10%" y="-10%" width="120%" height="120%"><feGaussianBlur stdDeviation="0.6"/></filter>
<filter id="bpb2" x="-20%" y="-20%" width="140%" height="140%"><feGaussianBlur stdDeviation="1.8"/></filter>
<clipPath id="bpclip"><rect width="133" height="162"/></clipPath>
</defs>
<g clip-path="url(#bpclip)">
<rect width="133" height="34" fill="url(#bpsky)"/>
<g filter="url(#bpb2)"><ellipse cx="34" cy="5" rx="30" ry="3.4" fill="#DCE2F4" opacity="0.8"/><ellipse cx="16" cy="15" rx="30" ry="6" fill="#D8DCF0" opacity="0.85"/><ellipse cx="66" cy="9" rx="16" ry="2.6" fill="#D0D8F0" opacity="0.6"/><ellipse cx="94" cy="10" rx="10" ry="1.6" fill="#C6D0EC" opacity="0.6"/></g>
<rect y="31" width="133" height="62" fill="url(#bplake)"/>
<rect y="36" width="133" height="40" fill="url(#bplight)"/>
<g filter="url(#bpb1)">
<path d="M0 22.4 L8 22 L16 22.6 L24 21 L32 20.4 L37 19 L42 17.6 L48 17 L54 15.4 L60 14.6 L66 13.6 L71 12.4 L76 13.6 L82 13 L88 14 L94 13.2 L99 12.4 L104 13.2 L110 14 L116 13 L122 13.8 L128 13 L133 13.6 V31.4 H0 Z" fill="url(#bptree)"/>
<path d="M56 16.6 L60 15.6 L66 14.6 L71 13.4 L76 14.6 L82 14 L88 15 L94 14.2 L99 13.4 L104 14.2 L110 15 L116 14 L122 14.8 L128 14 L133 14.6 V19 L100 21 L56 19 Z" fill="url(#bptreehl)"/>
<path d="M0 31.2 H133 V32.2 H0 Z" fill="#7E8AA0" opacity="0.7"/>
<path d="M0 32.4 H133 V47 L112 48 L96 46 L74 47.4 L50 43 L24 42.4 L0 41 Z" fill="#1A263E" opacity="0.6" filter="url(#bpb2)"/>
</g>
<path d="M125.6 0 H133 V31 Q128.6 18 125.6 0 Z" fill="#16223E"/>
<path d="M108.2 11.1 L122.6 6.7 L119.8 0" stroke="#1A2030" stroke-width="1.4" fill="none"/>
<path d="M0 89.8 L22.6 72.8 H120.6 L133 79.6 V162 H0 Z" fill="url(#bpdock)"/>
<path d="M0 89.8 L22.6 72.8 M120.6 72.8 L133 79.6" stroke="#6E6880" stroke-width="1"/>
<g stroke="#81798F" stroke-width="0.6" opacity="0.85"><path d="M19 75.8 H126 M14 79.4 H132 M9 83.4 H133 M3 87.8 H133 M0 92.6 H133 M0 97.8 H133 M0 103.4 H133 M0 109.4 H133 M0 115.8 H133 M0 122.6 H133 M0 129.8 H133 M0 137.4 H133 M0 145.6 H133 M0 154.2 H133"/></g>
<g filter="url(#bpb2)"><path d="M0 118 L30 120 L30 124 L0 123 Z" fill="#4A4460" opacity="0.7"/><path d="M0 134 L40 136 L66 130 L94 135 L98 150 L62 157 L0 153 Z" fill="#453F5A" opacity="0.7"/><path d="M0 154 L133 156 V162 H0 Z" fill="#5A546A" opacity="0.35"/></g>
<g filter="url(#bpb1)">
<path d="M42 0 L39.4 18 L40 30" stroke="#2A2A36" stroke-width="0.9" fill="none"/>
<!-- boy arms / head -->
<path d="M19.4 63 Q18 58 23 51 L31 39 Q33 36 36 38 L37 43 L31 55 L30 66 Z" fill="#C89878"/>
<path d="M65.4 66 Q67 60 62 52 L53 41 L49 43 L53 56 L56 68 Z" fill="#C89878"/>
<ellipse cx="46" cy="52" rx="9.2" ry="10.6" fill="#DAAA90"/>
<path d="M35.4 43 Q35 29.4 46 28.2 Q57.6 28.6 57.2 44 Q52 38 46.4 40 Q41 40 35.4 43 Z" fill="#9C8062"/>
<path d="M44 30 Q50 29 54 33 L52 36 Q48 33 44 33 Z" fill="#C2A884" opacity="0.8"/>
<path d="M35.8 30 H44.6 V44.6 L39.6 46.6 L35.8 43 Z" fill="#1C1C24"/>
<path d="M35 46.4 Q44 50.4 55 45.4" stroke="#1C1C24" stroke-width="1.5" fill="none"/>
<path d="M42.4 55 Q46 58 49.6 55" stroke="#8A4A40" stroke-width="1" fill="none"/>
<!-- vest -->
<path d="M29 58 Q35 54.6 40 58.6 L45.6 65.6 L52 58 Q58 55 64.4 61 L69 107.6 Q50 115 27 113.6 L25 84 Z" fill="url(#bpvest)"/>
<path d="M21 64 L29 58 L31.6 69 L24 71 Z" fill="#5E5238"/><path d="M62.4 59.4 L67 65 L63.4 71 L58 69 Z" fill="#564A32"/>
<path d="M29.6 68 Q35 64 40.4 69 L40 77 L31 79 Z" fill="#DDE8F4" opacity="0.85"/><path d="M50 63 L56 61 L56 70 L50 72 Z" fill="#C6DCF2" opacity="0.65"/>
<path d="M43 74.6 L64.6 73.6 L65 77.6 L43 78.8 Z" fill="#A2A8BA"/><path d="M46 89.8 L66.9 84.6 L67.6 89 L46.4 94.6 Z" fill="#A2A8BA"/><path d="M48.3 102.5 L68.7 96.5 L69.2 101 L48.6 107.4 Z" fill="#A2A8BA"/>
<path d="M37 70 L39.4 113" stroke="#1A2A50" stroke-width="1.6"/><path d="M27.6 85 L37 82.6 M28 97 L39 95.6" stroke="#16264A" stroke-width="1.8"/>
<path d="M31 96 L35 96 L35.6 113 L31.4 112 Z" fill="#E8ECF0" opacity="0.85"/>
<!-- shorts / legs -->
<path d="M30.4 112 Q50 117 66.4 108.6 L67.8 135 Q60 139 52.4 137.4 L49.8 121 L46.2 138 Q38 140.4 29.6 136 Z" fill="#937B52"/>
<path d="M31 114 Q36.4 128 31 136" stroke="#71603E" stroke-width="1.2" fill="none"/><path d="M58 112 Q62 124 60 137" stroke="#A88E62" stroke-width="1.6" fill="none"/>
<path d="M36.4 138.6 L43.8 139.4 L42.8 150 L41 157.4 Q36 160.6 30.6 157.6 L36.6 150 Z" fill="#D9A88E"/>
<path d="M51.3 138.4 L59.4 137.8 L58.6 152 L60 159.4 Q55.6 162 50.6 160 L52.2 152 Z" fill="#D9A88E"/>
<!-- fish -->
<path d="M105.8 78.8 Q112 78 118 83.6 L128.6 91.6 L124 93.6 Q114 96.6 109 89.6 Q106 84.6 105.8 78.8 Z" fill="#525A62"/><path d="M110 85 Q116 89 122 92.4 Q114 94.6 110 89 Z" fill="#C6CCD2" opacity="0.8"/><path d="M116 82 L124.6 84.4 L120 88 Z" fill="#2A3036"/>
<!-- cat -->
<path d="M85.8 99 Q90.6 96 94.6 103 Q98.6 113 103.4 119 L99 128 Q92 121 88 109 Q84.6 102 85.8 99 Z" fill="#D4924E"/><ellipse cx="88" cy="99.6" rx="3.2" ry="2.6" fill="#F6EEE4"/>
<path d="M100.2 80.6 Q104 78.4 105.2 83 L108 104 L109.4 114 L103.6 114 L101.6 95 Z" fill="#EBC39C"/><ellipse cx="102.6" cy="80.8" rx="2.8" ry="2.4" fill="#F2DAC4"/>
<path d="M96 124 Q98.6 109 111 106.6 Q123 104.6 126 112.6 L126 128 L123 146 L117 149 L99 149 Q93 139 96 124 Z" fill="url(#bpcat)"/>
<path d="M111 97.6 L115.4 101.6 Q121 98.6 125.6 101.4 L128.6 96.6 L129 108.6 Q126 115.6 118.4 114.8 Q111.6 112 111 104 Z" fill="#E2AA74"/>
<path d="M114.6 106.4 Q120.6 111 127 106.4" stroke="#F8EAD8" stroke-width="2" fill="none"/>
<path d="M103.6 113 Q112 107 119.6 114 L120.6 140 Q112 148 103.6 141 Z" fill="#F4EEE8"/>
<path d="M119.6 122 L124.6 124 L128.4 139 L127.4 145.6 L123.6 145 L120.6 131 Z" fill="#DDA26A"/><ellipse cx="126.8" cy="142" rx="2.4" ry="3.6" fill="#FAF6F0"/>
<path d="M95 147 L101 146.6 L100 153 L94.6 153.6 Z" fill="#F6F0EA"/><path d="M117 146.6 L122.6 145 L127.6 151 L122.6 153.6 Z" fill="#F6F0EA"/>
</g>
</g></svg>
<svg style="left:740.5px;top:791px;" width="17" height="13" viewBox="0 0 17 13"><defs><linearGradient id="g37" x1="0" y1="0" x2="1" y2="0"><stop offset="0" stop-color="#C4C4C4"/><stop offset="0.5" stop-color="#8E8E8E"/><stop offset="1" stop-color="#A8A8A8"/></linearGradient></defs><rect x="0.4" y="0.4" width="2.2" height="12.2" fill="#9C9C9C"/><path d="M4.4 0.8 L16 6.5 L4.4 12.2 Z" fill="#D6D6D6" stroke="#8E8E8E" stroke-width="1.4" stroke-linejoin="round"/></svg>
<svg style="left:765.5px;top:791px;" width="15" height="13" viewBox="0 0 15 13"><defs><linearGradient id="g38" x1="0" y1="0" x2="1" y2="0"><stop offset="0" stop-color="#C4C4C4"/><stop offset="0.5" stop-color="#8E8E8E"/><stop offset="1" stop-color="#A8A8A8"/></linearGradient></defs><path d="M0.6 0.6 L14.6 6.5 L0.6 12.4 Z" fill="url(#g38)"/></svg>
<svg style="left:791px;top:791px;" width="13" height="13" viewBox="0 0 13 13"><defs><linearGradient id="g39" x1="0" y1="0" x2="1" y2="0"><stop offset="0" stop-color="#C4C4C4"/><stop offset="0.5" stop-color="#8E8E8E"/><stop offset="1" stop-color="#A8A8A8"/></linearGradient></defs><rect x="0.4" y="0.4" width="4.4" height="12.2" fill="url(#g39)" stroke="#9C9C9C" stroke-width="0.6"/><rect x="8" y="0.4" width="4.4" height="12.2" fill="url(#g39)" stroke="#9C9C9C" stroke-width="0.6"/></svg>
<svg style="left:815.5px;top:791.5px;" width="12.5" height="12.5" viewBox="0 0 12.5 12.5"><defs><linearGradient id="g40" x1="0" y1="0" x2="1" y2="1"><stop offset="0" stop-color="#C4C4C4"/><stop offset="0.5" stop-color="#8E8E8E"/><stop offset="1" stop-color="#A8A8A8"/></linearGradient></defs><rect x="0.4" y="0.4" width="11.7" height="11.7" fill="url(#g40)" stroke="#9A9A9A" stroke-width="0.8"/></svg>
<svg style="left:846.5px;top:791px;" width="13" height="13" viewBox="0 0 13 13"><defs><linearGradient id="g41" x1="0" y1="0" x2="1" y2="0"><stop offset="0" stop-color="#C4C4C4"/><stop offset="0.5" stop-color="#8E8E8E"/><stop offset="1" stop-color="#A8A8A8"/></linearGradient></defs><rect x="0.3" y="0.3" width="2.4" height="12.4" fill="#8E8E8E"/><path d="M12.4 0.6 L2.8 6.5 L12.4 12.4 Z" fill="url(#g41)"/></svg>
<div style="left:871px;top:790px;width:12px;height:15px;overflow:hidden">
<svg style="left:0.5px;top:1px;" width="13" height="13" viewBox="0 0 13 13"><defs><linearGradient id="g42" x1="0" y1="0" x2="1" y2="0"><stop offset="0" stop-color="#C4C4C4"/><stop offset="0.5" stop-color="#8E8E8E"/><stop offset="1" stop-color="#A8A8A8"/></linearGradient></defs><path d="M0.4 0.6 L10 6.5 L0.4 12.4 Z" fill="url(#g42)"/><rect x="10.2" y="0.3" width="2.4" height="12.4" fill="#8E8E8E"/></svg>
</div>
<svg style="left:594.5px;top:846px;" width="16" height="16" viewBox="0 0 16 16"><defs><linearGradient id="g43" x1="0" y1="0" x2="1" y2="1"><stop offset="0" stop-color="#F4F4F4"/><stop offset="0.35" stop-color="#9CD84E"/><stop offset="0.55" stop-color="#F0E24A"/><stop offset="0.75" stop-color="#BDBDBD"/><stop offset="1" stop-color="#F4F4F4"/></linearGradient></defs><circle cx="8" cy="8" r="7.2" fill="url(#g43)" stroke="#4A4A4A" stroke-width="1"/><circle cx="8" cy="8" r="2.6" fill="#fff" stroke="#6A6A6A" stroke-width="0.9"/><circle cx="8" cy="8" r="1" fill="#888"/></svg>
</body></html>
